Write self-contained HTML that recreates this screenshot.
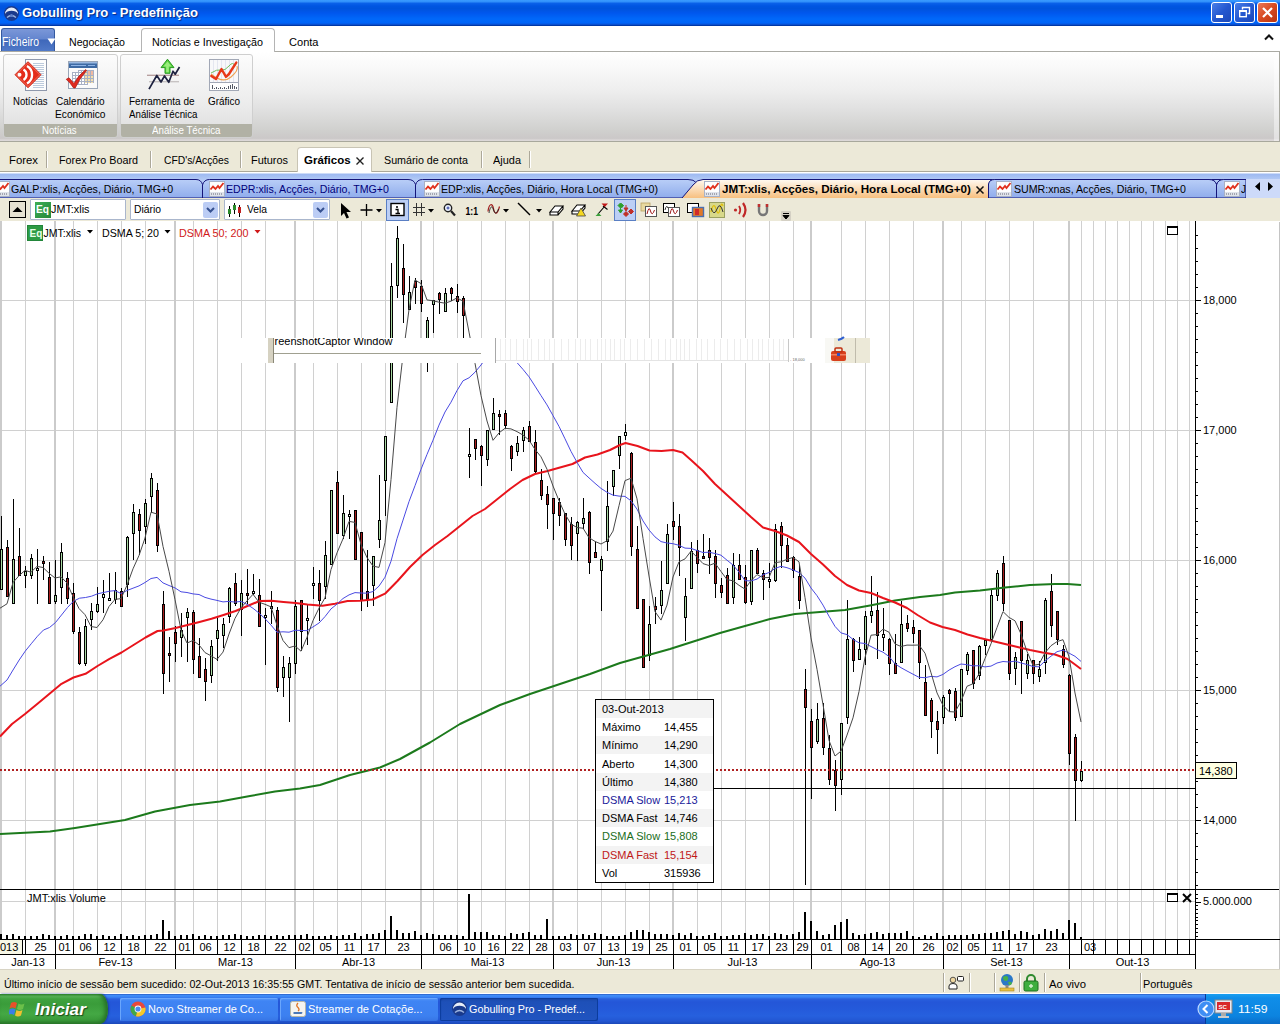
<!DOCTYPE html>
<html lang="pt"><head><meta charset="utf-8"><title>Gobulling Pro - Predefinição</title>
<style>
html,body{margin:0;padding:0}
body{width:1280px;height:1024px;overflow:hidden;position:relative;background:#fff;font-family:"Liberation Sans","DejaVu Sans",sans-serif;font-size:11px;color:#000}
.abs{position:absolute}
#title{position:absolute;left:0;top:0;width:1280px;height:26px;background:linear-gradient(#3a9bff 0,#3291fb 1.5px,#0a60e8 3.5px,#0055e2 6px,#0053dc 8.5px,#0057ee 13px,#0068fa 19px,#0064f8 23px,#0a4fd0 24.5px,#0038a8 25.5px,#0038a8 26px)}
#title .cap{position:absolute;left:22px;top:4px;font-weight:bold;font-size:13px;color:#fff;text-shadow:1px 1px 1px #0a2a80;white-space:nowrap;letter-spacing:0.2px}
.tb{position:absolute;top:2px;width:19px;height:19px;border:1px solid #fff;border-radius:3px;background:linear-gradient(135deg,#4a7fe8,#2458d0 50%,#1c48b8)}
.tb.close{background:linear-gradient(135deg,#e87858,#d84a20 50%,#b83410)}
#tabs1{position:absolute;left:0;top:26px;width:1280px;height:25px;background:#fff;border-bottom:1px solid #aaaaa4}
#ribbon{position:absolute;left:0;top:52px;width:1280px;height:89px;background:linear-gradient(#fff 0,#f8f8f8 20%,#eee 43%,#e0e0e0 65%,#d0d0ce 88%,#cbc8c8 97%,#dcd8d8 99%)}
.grp{position:absolute;top:2px;height:82px;border:1px solid #cfcfcf;border-radius:3px;background:linear-gradient(#fcfcfc,#ececec 60%,#dcdcdc);overflow:hidden}
.grp .gl{position:absolute;left:0;right:0;bottom:0;height:13px;background:#b1b1a5;color:#fff;text-align:center;font-size:11px;line-height:13px}
.rl{position:absolute;text-align:center;font-size:11px;line-height:13px;white-space:nowrap}
.t1{position:absolute;top:9px;font-size:11px;white-space:nowrap}
#band{position:absolute;left:0;top:141px;width:1280px;height:81px;background:#ece9d8;box-shadow:inset 0 1px 0 #a8a89c}
.t2{position:absolute;top:153px;font-size:11px;white-space:nowrap}
.sep2{position:absolute;top:10px;width:1px;height:17px;background:#aca899;box-shadow:1px 0 0 #fff}
.ct{position:absolute;top:182px;font-size:11px;white-space:nowrap}
.tx{position:absolute;white-space:nowrap;transform-origin:0 0;line-height:13px;font-size:11px}
.cb{top:58px;height:21px;box-sizing:border-box;border:1px solid #aab6cc;background:#fff;border-radius:1px}
#status{position:absolute;left:0;top:970px;width:1280px;height:23px;background:#ece9d8;border-bottom:1px solid #fff}
.ssep{position:absolute;top:3px;width:1px;height:19px;background:#aca899;box-shadow:1px 0 0 #fff}
#taskbar{position:absolute;left:0;top:994px;width:1280px;height:30px;background:linear-gradient(#2a5cc0 0,#3f8cf8 1.5px,#3a84f4 3px,#2960de 5px,#2456d8 8px,#2459da 14px,#2660de 22px,#2256d2 27px,#1b48b8 30px)}
#start{position:absolute;left:0;top:0;width:108px;height:30px;border-radius:0 8px 8px 0 / 0 15px 15px 0;background:linear-gradient(#2f8a2f 0,#5cb85c 2px,#3fa23f 5px,#3a9c3a 10px,#44a844 20px,#3a9a3a 26px,#2a7a2a 30px);box-shadow:inset -3px 0 4px #267026,1px 0 2px #1a3a9a}
.tk{position:absolute;top:4px;height:23px;border-radius:2px;background:linear-gradient(#5c9cfa 0,#3f84f4 3px,#3c80f0 18px,#3674e4 23px);box-shadow:inset 1px 1px 0 #6aa6fc}
.tk.on{background:linear-gradient(#1a48a8 0,#1e50b8 4px,#2054c0 23px);box-shadow:inset 1px 1px 1px #0c3c9c, inset -1px -1px 0 #0c3c9c}
#tray{position:absolute;left:1205px;top:0;width:75px;height:30px;background:linear-gradient(#1aa0f0 0,#0f8ee9 4px,#0c84e0 22px,#0a6cc8 30px);border-left:1px solid #0a3a9a}

</style></head><body>
<div id="title">
 <svg class="abs" style="left:3px;top:5px" width="17" height="17" viewBox="0 0 17 17"><circle cx="8.5" cy="8.5" r="7.5" fill="#1a3a8c"/><path d="M2,9 a6.5,6.5 0 0 1 13,0 a7,5 0 0 0 -13,0z" fill="#e8eef8"/><path d="M4,12.5 q4.5,-4 9,0" stroke="#9db4e0" stroke-width="1.2" fill="none"/><circle cx="8.5" cy="10.5" r="1.6" fill="#5f7fc8"/></svg>
 <span class="tx" style="left:21.5px;top:5px;font-weight:bold;font-size:13px;line-height:16px;color:#fff;text-shadow:1px 1px 1px #0a2a80;transform:scaleX(1.003)">Gobulling Pro - Predefinição</span>
 <div class="tb" style="left:1211px"><svg width="19" height="19"><rect x="4" y="12" width="7" height="3" fill="#fff"/></svg></div>
 <div class="tb" style="left:1234px"><svg width="19" height="19"><path d="M7.5,6.5 v-2 h7 v6 h-2" fill="none" stroke="#fff" stroke-width="1.4"/><rect x="4.7" y="7.7" width="6.6" height="6" fill="none" stroke="#fff" stroke-width="1.4"/><rect x="4" y="7" width="8" height="2" fill="#fff"/></svg></div>
 <div class="tb close" style="left:1257px"><svg width="19" height="19"><path d="M5,5 L14,14 M14,5 L5,14" stroke="#fff" stroke-width="2.2"/></svg></div>
</div>
<div id="tabs1">
 <div class="abs" style="left:1px;top:2px;width:54px;height:23px;border-radius:3px 3px 0 0;background:linear-gradient(#7b97d8 0,#6486cf 45%,#3f68ba 50%,#5079c8 100%);border:1px solid #35599f;border-bottom:none;box-sizing:border-box"></div>
 <span class="tx" style="left:1.5px;top:9px;color:#fff;font-size:12px;line-height:15px;transform:scaleX(0.867)">Ficheiro</span>
 <svg class="abs" style="left:47px;top:12px" width="9" height="7"><path d="M0.5,0.5 h8 l-4,6z" fill="#fff"/></svg>
 <span class="tx" style="left:68.5px;top:10px;;transform:scaleX(0.964)">Negociação</span>
 <div class="abs" style="left:141px;top:2px;width:134px;height:25px;box-sizing:border-box;border:1px solid #b4b4b4;border-bottom:none;border-radius:4px 4px 0 0;background:#fff"></div>
 <span class="tx" style="left:151.5px;top:10px;;transform:scaleX(0.976)">Notícias e Investigação</span>
 <span class="tx" style="left:289px;top:10px;;transform:scaleX(1.005)">Conta</span>
 <svg class="abs" style="left:1264px;top:8px" width="10" height="7"><path d="M1,5.5 L5,1.5 L9,5.5" stroke="#111" stroke-width="2" fill="none"/></svg>
</div>
<div id="ribbon">
 <div class="abs" style="left:1279px;top:0;width:1px;height:89px;background:#a8a8a0"></div><div class="abs" style="left:1274px;top:0;width:5px;height:89px;background:rgba(255,255,255,.45)"></div>
 <div class="grp" style="left:3px;width:113px"><div class="gl"></div></div>
 <div class="grp" style="left:120px;width:131px"><div class="gl"></div></div>
 <span class="tx" style="left:42px;top:72px;color:#fff;transform:scaleX(0.868)">Notícias</span><span class="tx" style="left:151.5px;top:72px;color:#fff;transform:scaleX(0.884)">Análise Técnica</span>
 <!-- icons -->
 <svg class="abs" style="left:14px;top:6px" width="34" height="34" viewBox="0 0 34 34">
  <rect x="11.500" y="1.500" width="21" height="31" fill="#fdfdfd" stroke="#8e98ac"/>
  <g stroke="#bccadc" stroke-width="1"><path d="M19,5.500h11M19,7.500h11M19,9.500h11M22,11.500h8M24,13.500h6M25,15.500h5M25,17.500h5M24,19.500h6M22,21.500h8M20,23.500h10M18,25.500h12M19,27.500h11M19,29.500h11"/></g>
  <path d="M14,4.500 L26.200,16.700 L14,28.900 L1.800,16.700z" fill="#e42c1a" stroke="#ee5a48" stroke-width="1.600" stroke-linejoin="round"/>
  <path d="M14,3.700 L27,16.700 L14,29.700 L1,16.700z" fill="none" stroke="#c8200f" stroke-width="0.800" stroke-linejoin="round"/>
  <circle cx="5.500" cy="16.700" r="2" fill="#fff"/>
  <path d="M9.500,11.500 a6,6 0 0 1 0,10.400" stroke="#fff" stroke-width="2.300" fill="none"/>
  <path d="M13,8 a10,10 0 0 1 0,17.400" stroke="#fff" stroke-width="2.300" fill="none"/>
 </svg>
 <svg class="abs" style="left:65px;top:6px" width="34" height="34" viewBox="0 0 34 34">
  <rect x="3.500" y="3.500" width="29" height="27" fill="#fafafa" stroke="#9aa6b8"/>
  <rect x="4" y="4" width="28" height="6" fill="#3d6aa4"/><rect x="4" y="4" width="28" height="1.500" fill="#9ab8e0"/><path d="M6,7.500h15M23,7.500h7" stroke="#8fb4e6" stroke-width="1.200"/>
  <g shape-rendering="crispEdges">
   <rect x="7" y="14" width="15" height="14" fill="#fff"/><rect x="13" y="12" width="16" height="13" fill="#fff"/>
   <rect x="20" y="12" width="9" height="13" fill="#f6e0a8"/><rect x="23" y="12" width="6" height="6" fill="#f0b8a0"/>
   <g stroke="#a8b0c4" stroke-width="1"><path d="M7,14.500h15M7,17.500h22M7,20.500h22M7,23.500h22M7,26.500h15M13,12.500h16M7.500,14v13M10.500,14v13M13.500,12v15M16.500,12v15M19.500,12v15M22.500,12v15M25.500,12v13M28.500,12v13"/></g>
  </g>
  <path d="M1.200,21.300 L4,19.800 L9,25.500 Q13.500,17 20.800,11.600 L21.600,12.400 Q14.500,20.500 10.200,30 L8.600,30 Q5.500,25 1.200,21.300z" fill="#e02a20" stroke="#a81a12" stroke-width="0.700"/>
 </svg>
 <svg class="abs" style="left:147px;top:6px" width="34" height="34" viewBox="0 0 34 34">
  <path d="M0,17.300h32" stroke="#b49a9a" stroke-width="1.300"/><path d="M2,23.700h30" stroke="#c4c0c0" stroke-width="1.300"/>
  <path d="M2,31.200 L9.800,17.500 L14,24 L17.500,18 L21.800,24.300 L26,13.200 L28.200,16.200 L32.500,9" fill="none" stroke="#1e2240" stroke-width="1.700" stroke-linejoin="round"/>
  <path d="M20.500,1.200 L27,9.600 H23 V15.300 H18 V9.600 H14z" fill="#58d040" stroke="#2a9a22" stroke-width="1" stroke-linejoin="round"/>
  <path d="M20.500,3.500 L24.500,8.600 H21.800 V14.300 H19.200 V8.600 H16.500z" fill="#9aee7c"/>
 </svg>
 <svg class="abs" style="left:209px;top:6px" width="31" height="34" viewBox="0 0 31 34">
  <rect x="0.500" y="1.500" width="29" height="31" fill="#f8f8fa" stroke="#a2a8b6"/>
  <g stroke="#e4e6f0" stroke-width="1"><path d="M4.500,2v22M8.500,2v22M12.500,2v22M16.500,2v22M20.500,2v22M24.500,2v22"/></g>
  <path d="M1,24.500h28" stroke="#a2a8b6"/><rect x="1" y="25" width="28" height="7" fill="#fff"/>
  <g stroke="#555a66" stroke-width="1"><path d="M3.500,31v-4M5.500,31v-1M7.500,31v-2M9.500,31v-1M11.500,31v-2M13.500,31v-1M15.500,31v-2M17.500,31v-1M19.500,31v-3M21.500,31v-4M23.500,31v-5M25.500,31v-3M27.500,31v-2"/></g>
  <path d="M2,16 Q14,26 22,19 T28,8" stroke="#f0a050" stroke-width="1.100" fill="none"/>
  <path d="M2,15 Q8,11 12,12 T20,8 T26,8" stroke="#70c060" stroke-width="1" fill="none"/>
  <path d="M2.300,18 L7,21 L12.500,11 L17,18.800 L20,16 L22.500,12 L27.300,4.600" fill="none" stroke="#e83818" stroke-width="2.400" stroke-linejoin="round" stroke-linecap="round"/>
 </svg>
 <span class="tx" style="left:13px;top:43px;;transform:scaleX(0.868)">Notícias</span>
 <span class="tx" style="left:56px;top:43px;;transform:scaleX(0.912)">Calendário</span><span class="tx" style="left:55px;top:56px;;transform:scaleX(0.928)">Económico</span>
 <span class="tx" style="left:129px;top:43px;;transform:scaleX(0.908)">Ferramenta de</span><span class="tx" style="left:128.5px;top:56px;;transform:scaleX(0.884)">Análise Técnica</span>
 <span class="tx" style="left:207.5px;top:43px;;transform:scaleX(0.902)">Gráfico</span>
</div>

<div id="band">
 <!-- tab row 2 : band top = 141 -->
 <div class="abs" style="left:0;top:30px;width:1280px;height:1px;background:#aca899"></div>
 <div class="abs" style="left:297px;top:6px;width:75px;height:26px;box-sizing:border-box;background:#fff;border:1px solid #c8c4b4;border-bottom:none;border-radius:4px 4px 0 0"></div>
 <span class="tx" style="left:8.5px;top:13px;;transform:scaleX(1.031)">Forex</span><span class="tx" style="left:59px;top:13px;;transform:scaleX(0.979)">Forex Pro Board</span><span class="tx" style="left:163.5px;top:13px;;transform:scaleX(0.937)">CFD's/Acções</span><span class="tx" style="left:250.5px;top:13px;;transform:scaleX(0.992)">Futuros</span>
 <span class="tx" style="left:304px;top:13px;font-weight:bold;transform:scaleX(1.042)">Gráficos</span><span class="tx" style="left:384px;top:13px;;transform:scaleX(0.974)">Sumário de conta</span><span class="tx" style="left:492.5px;top:13px;;transform:scaleX(0.995)">Ajuda</span>
 <svg class="abs" style="left:355px;top:15px" width="10" height="10"><path d="M1.500,1.500 L8.500,8.500 M8.500,1.500 L1.500,8.500" stroke="#222" stroke-width="1.400"/></svg>
 <div class="sep2" style="left:46px"></div><div class="sep2" style="left:150px"></div><div class="sep2" style="left:240px"></div><div class="sep2" style="left:481px"></div><div class="sep2" style="left:529px"></div>
 <!-- blue band -->
 <div class="abs" style="left:0;top:31px;width:1280px;height:26px;background:linear-gradient(#fff 0,#fff 1px,#9db9f1 2px,#b4cbf6 8px,#a9c2f4 26px)"></div>
 <!-- chart tabs -->
 <svg class="abs" style="left:0;top:31px" width="1280" height="26" viewBox="0 172 1280 26">
  <defs>
   <linearGradient id="tg" x1="0" y1="0" x2="0" y2="1"><stop offset="0" stop-color="#b9cef7"/><stop offset="1" stop-color="#8facec"/></linearGradient>
   <linearGradient id="ta" x1="0" y1="0" x2="0" y2="1"><stop offset="0" stop-color="#fffaf2"/><stop offset="1" stop-color="#f7be7c"/></linearGradient>
  </defs>
  <path d="M-5,198 V179.500 H196 q5,0 6.500,5 V198z" fill="url(#tg)" stroke="#15157a"/>
  <path d="M202.500,198 V185 q1.500,-5.500 7,-5.500 H408 q6,0 7.500,5 V198z" fill="url(#tg)" stroke="#15157a"/>
  <path d="M415.500,198 V185 q1.500,-5.500 7,-5.500 H688 q6,0 8,3 L684,198z" fill="url(#tg)" stroke="#15157a"/>
  <path d="M988.500,198 V184 q1,-4.500 6,-4.500 H1209 q6,0 7.500,5 V198z" fill="url(#tg)" stroke="#15157a"/>
  <path d="M1216.500,198 V185 q1.500,-5.500 7,-5.500 H1246 V198z" fill="url(#tg)" stroke="#15157a"/>
  <path d="M682,198.500 L693,185 q4,-5.500 10,-5.500 H990 V198.500z" fill="url(#ta)"/>
  <path d="M682,198 L693,185 q4,-5.500 10,-5.500 H1246" fill="none" stroke="#15157a"/>
  <rect x="988" y="180" width="258" height="19" fill="none"/>
  <path d="M988.500,198 V184 q1,-4.500 6,-4.500 H1209 q6,0 7.500,5 V198z" fill="url(#tg)" stroke="#15157a"/>
  <path d="M1216.500,198 V185 q1.500,-5.500 7,-5.500 H1246 V198z" fill="url(#tg)" stroke="#15157a"/>
  <rect x="1246" y="179" width="34" height="19" fill="#cddaf9"/>
  <path d="M1257,183 v8 l-4.500,-4z M1267,183 v8 l4.500,-4z" fill="#000"/>
 </svg>
 <svg class="abs" style="left:-6px;top:40px" width="16" height="16" viewBox="0 0 16 16"><rect x="0.500" y="0.500" width="15" height="15" fill="#fdfdfd" stroke="#a9b2c6"/><rect x="1" y="11" width="14" height="4" fill="#dfe3ea"/><path d="M2.500,13.500v-1M4.500,13.500v-1M6.500,13.500v-1M8.500,13.500v-1M10.500,13.500v-1M12.500,13.500v-1" stroke="#667"/><path d="M1.500,8.500 L4,5.500 L6.500,8 L9,5 L10.500,7 L14.500,2" fill="none" stroke="#e0301c" stroke-width="1.800"/></svg>
 <svg class="abs" style="left:209px;top:40px" width="16" height="16" viewBox="0 0 16 16"><rect x="0.500" y="0.500" width="15" height="15" fill="#fdfdfd" stroke="#a9b2c6"/><rect x="1" y="11" width="14" height="4" fill="#dfe3ea"/><path d="M2.500,13.500v-1M4.500,13.500v-1M6.500,13.500v-1M8.500,13.500v-1M10.500,13.500v-1M12.500,13.500v-1" stroke="#667"/><path d="M1.500,8.500 L4,5.500 L6.500,8 L9,5 L10.500,7 L14.500,2" fill="none" stroke="#e0301c" stroke-width="1.800"/></svg>
 <svg class="abs" style="left:424px;top:40px" width="16" height="16" viewBox="0 0 16 16"><rect x="0.500" y="0.500" width="15" height="15" fill="#fdfdfd" stroke="#a9b2c6"/><rect x="1" y="11" width="14" height="4" fill="#dfe3ea"/><path d="M2.500,13.500v-1M4.500,13.500v-1M6.500,13.500v-1M8.500,13.500v-1M10.500,13.500v-1M12.500,13.500v-1" stroke="#667"/><path d="M1.500,8.500 L4,5.500 L6.500,8 L9,5 L10.500,7 L14.500,2" fill="none" stroke="#e0301c" stroke-width="1.800"/></svg>
 <svg class="abs" style="left:704px;top:40px" width="16" height="16" viewBox="0 0 16 16"><rect x="0.500" y="0.500" width="15" height="15" fill="#fdfdfd" stroke="#a9b2c6"/><rect x="1" y="11" width="14" height="4" fill="#dfe3ea"/><path d="M2.500,13.500v-1M4.500,13.500v-1M6.500,13.500v-1M8.500,13.500v-1M10.500,13.500v-1M12.500,13.500v-1" stroke="#667"/><path d="M1.500,8.500 L4,5.500 L6.500,8 L9,5 L10.500,7 L14.500,2" fill="none" stroke="#e0301c" stroke-width="1.800"/></svg>
 <svg class="abs" style="left:996px;top:40px" width="16" height="16" viewBox="0 0 16 16"><rect x="0.500" y="0.500" width="15" height="15" fill="#fdfdfd" stroke="#a9b2c6"/><rect x="1" y="11" width="14" height="4" fill="#dfe3ea"/><path d="M2.500,13.500v-1M4.500,13.500v-1M6.500,13.500v-1M8.500,13.500v-1M10.500,13.500v-1M12.500,13.500v-1" stroke="#667"/><path d="M1.500,8.500 L4,5.500 L6.500,8 L9,5 L10.500,7 L14.500,2" fill="none" stroke="#e0301c" stroke-width="1.800"/></svg>
 <svg class="abs" style="left:1224px;top:40px" width="16" height="16" viewBox="0 0 16 16"><rect x="0.500" y="0.500" width="15" height="15" fill="#fdfdfd" stroke="#a9b2c6"/><rect x="1" y="11" width="14" height="4" fill="#dfe3ea"/><path d="M2.500,13.500v-1M4.500,13.500v-1M6.500,13.500v-1M8.500,13.500v-1M10.500,13.500v-1M12.500,13.500v-1" stroke="#667"/><path d="M1.500,8.500 L4,5.500 L6.500,8 L9,5 L10.500,7 L14.500,2" fill="none" stroke="#e0301c" stroke-width="1.800"/></svg>
 <span class="tx" style="left:11px;top:42px;;transform:scaleX(0.967)">GALP:xlis, Acções, Diário, TMG+0</span><span class="tx" style="left:226px;top:42px;color:#00007a;transform:scaleX(0.965)">EDPR:xlis, Acções, Diário, TMG+0</span><span class="tx" style="left:441px;top:42px;;transform:scaleX(0.966)">EDP:xlis, Acções, Diário, Hora Local (TMG+0)</span>
 <span class="tx" style="left:721.5px;top:42px;font-weight:bold;transform:scaleX(1.058)">JMT:xlis, Acções, Diário, Hora Local (TMG+0)</span><span class="tx" style="left:1013.5px;top:42px;;transform:scaleX(0.966)">SUMR:xnas, Acções, Diário, TMG+0</span><span class="tx" style="left:1240.5px;top:42px;;transform:scaleX(0.909)">J</span>
 <svg class="abs" style="left:975px;top:44px" width="10" height="10"><path d="M1.500,1.500 L8.500,8.500 M8.500,1.500 L1.500,8.500" stroke="#111" stroke-width="1.500"/></svg>
 <div class="abs" style="left:1246px;top:38px;width:34px;height:19px;background:#cddaf9"></div>
 <svg class="abs" style="left:1250px;top:39px" width="28" height="14"><path d="M10,2 v9 l-5,-4.500z M18,2 v9 l5,-4.500z" fill="#000"/></svg>

 <!-- toolbar (band-relative; band top=141) -->
 <div class="abs" style="left:9px;top:60px;width:17px;height:17px;box-sizing:border-box;border:1px solid #000;background:#e6e2d2"></div>
 <svg class="abs" style="left:9px;top:60px" width="17" height="17"><path d="M3.500,11 h10 l-5,-5z" fill="#000"/></svg>
 <div class="abs cb" style="left:30px;width:96px"></div>
 <div class="abs cb" style="left:130px;width:90px"></div>
 <div class="abs cb" style="left:224px;width:106px"></div>
 <div class="abs" style="left:35px;top:61px;width:16px;height:16px;background:linear-gradient(135deg,#3fae55,#25883b);"></div>
 <span class="tx" style="left:36px;top:62px;font-weight:bold;font-size:10px;color:#fff;transform:scaleX(1.017)">Eq</span>
 <span class="tx" style="left:51px;top:62px;;transform:scaleX(0.984)">JMT:xlis</span><span class="tx" style="left:133.5px;top:62px;;transform:scaleX(0.940)">Diário</span><span class="tx" style="left:246.5px;top:62px;;transform:scaleX(0.934)">Vela</span>
 <svg class="abs" style="left:203px;top:61px" width="15" height="16"><rect width="15" height="16" rx="2" fill="#bccdf5"/><path d="M4,6 L7.500,9.500 L11,6" stroke="#35508f" stroke-width="2" fill="none"/></svg><svg class="abs" style="left:313px;top:61px" width="15" height="16"><rect width="15" height="16" rx="2" fill="#bccdf5"/><path d="M4,6 L7.500,9.500 L11,6" stroke="#35508f" stroke-width="2" fill="none"/></svg>
 <svg class="abs" style="left:227px;top:61px" width="16" height="16"><g shape-rendering="crispEdges"><rect x="2" y="4" width="1" height="11" fill="#000"/><rect x="1" y="7" width="3" height="5" fill="#2a8a2a" stroke="none"/><rect x="7" y="1" width="1" height="11" fill="#000"/><rect x="6" y="3" width="3" height="5" fill="#2a8a2a"/><rect x="12" y="3" width="1" height="12" fill="#000"/><rect x="11" y="5" width="3" height="6" fill="#c02020"/></g></svg>
 <!-- tool icons -->
 <svg class="abs" style="left:336px;top:57px" width="460" height="24" viewBox="336 198 460 24">
  <path d="M341,203 v13 l3,-3 l2.500,5.500 l2.500,-1 l-2.500,-5.500 h4.500z" fill="#000"/>
  <path d="M366.500,204 v12 M360.500,210 h12" stroke="#000" stroke-width="1.300" fill="none"/>
  <path d="M376,209 h6 l-3,3.500z M428,209 h6 l-3,3.500z M503,209 h6 l-3,3.500z M536,209 h6 l-3,3.500z" fill="#000"/>
  <rect x="386.500" y="199.500" width="22" height="21" fill="#bccff5" stroke="#5a7fc4"/>
  <rect x="391" y="203.500" width="13" height="12" fill="#fff" stroke="#000" stroke-width="1.400"/>
  <path d="M396,207 h2 M395.500,209.500 h2.500 v4 M395.500,213.500 h4.500" stroke="#000" stroke-width="1.300" fill="none"/>
  <g stroke="#333" stroke-width="1" shape-rendering="crispEdges"><path d="M416.500,203 v13 M420.500,203 v13 M413,206.500 h12 M413,210.500 h12 M413,214.500 h12 M424.500,203 v13 M412.500,203 v13" stroke-opacity="0"/><path d="M416.500,203v13M421.500,203v13M413,207.500h12M413,212.500h12"/></g>
  <circle cx="448" cy="208" r="3.700" fill="#eef4ff" stroke="#222" stroke-width="1.400"/><path d="M451,211 l4,4.500" stroke="#222" stroke-width="2.200"/><path d="M446.500,208h3M448,206.500v3" stroke="#2a3fa0" stroke-width="1"/>
  <text x="465.500" y="214.500" font-family="Liberation Sans, sans-serif" font-size="11" font-weight="bold" fill="#000" textLength="12.500" lengthAdjust="spacingAndGlyphs">1:1</text>
  <path d="M488,211.500 C489,203 492.500,203 493.500,208.500 S497,216 499.500,206.500" stroke="#a01c1c" stroke-width="1.200" fill="none"/><path d="M489,213 C490.500,205.500 492,205.500 493.500,210 S496.500,214 498.500,209" stroke="#222" stroke-width="0.900" fill="none"/>
  <path d="M518,203 L530,215" stroke="#000" stroke-width="1.400"/>
  <path d="M550,212 l5,-6 h8 l-5,6z M550,212 v3 h8 v-3 M558,215 l5,-6 v-3" fill="#fff" stroke="#000" stroke-width="1.100"/>
  <path d="M572,211 l5,-6 h8 l-5,6z M572,211 v3 h8 v-3 M580,214 l5,-6 v-3" fill="#fff" stroke="#000" stroke-width="1.100"/><path d="M581,208 l4.500,8 h-9z" fill="#f5d820" stroke="#444" stroke-width="0.800"/>
  <path d="M598,214 L605,206 M603,206 L607.500,209.500" stroke="#000" stroke-width="1.100"/><path d="M601.500,203.500 h6.500 l-3.200,3.500z" fill="#c01818"/><path d="M595.500,216 h6 l-3,-3z" fill="#3aa03a"/>
  <rect x="614.500" y="199.500" width="21" height="21" fill="#bccff5" stroke="#5a7fc4"/>
  <path d="M618,205.500 l2.500,-2.500 l2.500,2.500 l-2.500,2.500z M621,203.500 l2.500,2 l-2,2.500 M620.500,208 v4 M618.500,210 l2,3 l2,-3z" fill="#2ea02e" stroke="#2ea02e" stroke-width="1"/><path d="M626,205 v5 M624,208 l2,3 l2,-3z M623.500,214 l2.500,-2.500 l2.500,2.500 l-2.500,2.500z M628.500,211.500 l2.500,-2.500 l2.500,2.500 l-2.500,2.500z" fill="#c03028" stroke="#c03028" stroke-width="1"/>
  <!-- group 2 -->
  <rect x="641" y="203" width="9" height="8" fill="#e8d9a0" stroke="#b8a060" stroke-width="0.800"/><rect x="645.500" y="206.500" width="11" height="10" fill="#fff" stroke="#555"/><path d="M647,214 q2,-9 3.500,-3 t4,-1" stroke="#a01818" fill="none"/>
  <rect x="663.500" y="203.500" width="11" height="9" fill="#fff" stroke="#000"/><rect x="668.500" y="207.500" width="11" height="9" fill="#fff" stroke="#555"/><path d="M670,214 q2,-9 3.500,-3 t4,-1" stroke="#a01818" fill="none"/><path d="M665,210 q1.500,-6 3,-2" stroke="#333" fill="none"/>
  <rect x="687.500" y="203.500" width="11" height="9" fill="#fff" stroke="#000"/><rect x="692.500" y="207.500" width="11" height="9" fill="#e07828" stroke="#4a6fb0" stroke-width="1.400"/><rect x="695" y="209" width="4" height="6" fill="#d02a2a"/>
  <rect x="709.500" y="202.500" width="15" height="15" fill="#d8d88a" stroke="#9aa060"/><path d="M711,212 q2.500,-11 5,-3 t4,0 t3,-3" stroke="#e0c010" stroke-width="1.300" fill="none"/><path d="M711,208 q3,9 6,1 t6,3" stroke="#333" fill="none"/>
  <circle cx="735.500" cy="210" r="1.600" fill="#c02828"/><path d="M739,206 q2.500,4 0,8" stroke="#c02828" stroke-width="1.800" fill="none"/><path d="M743,203 q5,7 0,14" stroke="#c02828" stroke-width="2.200" fill="none"/>
  <path d="M759,204 v7 a4,4 0 0 0 8,0 v-7" stroke="#777" stroke-width="2.400" fill="none"/><path d="M757.800,204 h2.400 v3 h-2.400z M765.800,204 h2.400 v3 h-2.400z" fill="#c03030"/>
  <rect x="781" y="211" width="10" height="10" rx="1" fill="#d4d0c4"/><path d="M783,213.500 h6 M783,215.500 h6 l-3,3.500z" stroke="#000" stroke-width="1" fill="#000"/>
 </svg>
</div>

<svg id="chart" width="1280" height="749" viewBox="0 221 1280 749" style="position:absolute;left:0;top:221px">
<rect x="0" y="221" width="1280" height="749" fill="#fff"/>
<g shape-rendering="crispEdges">
<rect x="0" y="300" width="1195" height="1" fill="#d0d0d0"/>
<rect x="0" y="430" width="1195" height="1" fill="#d0d0d0"/>
<rect x="0" y="560" width="1195" height="1" fill="#d0d0d0"/>
<rect x="0" y="690" width="1195" height="1" fill="#d0d0d0"/>
<rect x="0" y="820" width="1195" height="1" fill="#d0d0d0"/>
<rect x="0" y="901" width="1195" height="1" fill="#d0d0d0"/>
<rect x="25" y="221" width="1" height="718" fill="#d0d0d0"/>
<rect x="54" y="221" width="2" height="718" fill="#cbcbcb"/>
<rect x="73" y="221" width="1" height="718" fill="#d0d0d0"/>
<rect x="97" y="221" width="1" height="718" fill="#d0d0d0"/>
<rect x="121" y="221" width="1" height="718" fill="#d0d0d0"/>
<rect x="145" y="221" width="1" height="718" fill="#d0d0d0"/>
<rect x="174" y="221" width="2" height="718" fill="#cbcbcb"/>
<rect x="193" y="221" width="1" height="718" fill="#d0d0d0"/>
<rect x="217" y="221" width="1" height="718" fill="#d0d0d0"/>
<rect x="241" y="221" width="1" height="718" fill="#d0d0d0"/>
<rect x="265" y="221" width="1" height="718" fill="#d0d0d0"/>
<rect x="294" y="221" width="2" height="718" fill="#cbcbcb"/>
<rect x="313" y="221" width="1" height="718" fill="#d0d0d0"/>
<rect x="337" y="221" width="1" height="718" fill="#d0d0d0"/>
<rect x="361" y="221" width="1" height="718" fill="#d0d0d0"/>
<rect x="385" y="221" width="1" height="718" fill="#d0d0d0"/>
<rect x="420" y="221" width="2" height="718" fill="#cbcbcb"/>
<rect x="433" y="221" width="1" height="718" fill="#d0d0d0"/>
<rect x="457" y="221" width="1" height="718" fill="#d0d0d0"/>
<rect x="481" y="221" width="1" height="718" fill="#d0d0d0"/>
<rect x="505" y="221" width="1" height="718" fill="#d0d0d0"/>
<rect x="529" y="221" width="1" height="718" fill="#d0d0d0"/>
<rect x="552" y="221" width="2" height="718" fill="#cbcbcb"/>
<rect x="577" y="221" width="1" height="718" fill="#d0d0d0"/>
<rect x="601" y="221" width="1" height="718" fill="#d0d0d0"/>
<rect x="625" y="221" width="1" height="718" fill="#d0d0d0"/>
<rect x="649" y="221" width="1" height="718" fill="#d0d0d0"/>
<rect x="672" y="221" width="2" height="718" fill="#cbcbcb"/>
<rect x="697" y="221" width="1" height="718" fill="#d0d0d0"/>
<rect x="721" y="221" width="1" height="718" fill="#d0d0d0"/>
<rect x="745" y="221" width="1" height="718" fill="#d0d0d0"/>
<rect x="769" y="221" width="1" height="718" fill="#d0d0d0"/>
<rect x="793" y="221" width="1" height="718" fill="#d0d0d0"/>
<rect x="810" y="221" width="2" height="718" fill="#cbcbcb"/>
<rect x="841" y="221" width="1" height="718" fill="#d0d0d0"/>
<rect x="865" y="221" width="1" height="718" fill="#d0d0d0"/>
<rect x="889" y="221" width="1" height="718" fill="#d0d0d0"/>
<rect x="913" y="221" width="1" height="718" fill="#d0d0d0"/>
<rect x="942" y="221" width="2" height="718" fill="#cbcbcb"/>
<rect x="961" y="221" width="1" height="718" fill="#d0d0d0"/>
<rect x="985" y="221" width="1" height="718" fill="#d0d0d0"/>
<rect x="1009" y="221" width="1" height="718" fill="#d0d0d0"/>
<rect x="1033" y="221" width="1" height="718" fill="#d0d0d0"/>
<rect x="1068" y="221" width="2" height="718" fill="#cbcbcb"/>
<rect x="1081" y="221" width="1" height="718" fill="#d0d0d0"/>
<rect x="1093" y="221" width="1" height="718" fill="#d0d0d0"/>
<rect x="1105" y="221" width="1" height="718" fill="#d0d0d0"/>
<rect x="1117" y="221" width="1" height="718" fill="#d0d0d0"/>
<rect x="1129" y="221" width="1" height="718" fill="#d0d0d0"/>
<rect x="1141" y="221" width="1" height="718" fill="#d0d0d0"/>
<rect x="1153" y="221" width="1" height="718" fill="#d0d0d0"/>
<rect x="1165" y="221" width="1" height="718" fill="#d0d0d0"/>
<rect x="1177" y="221" width="1" height="718" fill="#d0d0d0"/>
<rect x="1189" y="221" width="1" height="718" fill="#d0d0d0"/>
<rect x="0" y="221" width="2" height="718" fill="#cbcbcb"/>
</g>
<g shape-rendering="crispEdges">
<rect x="1" y="516" width="1" height="74" fill="#000"/>
<rect x="0" y="549" width="3" height="41" fill="#000"/>
<rect x="1" y="550" width="1" height="39" fill="#a9d9a3"/>
<rect x="7" y="540" width="1" height="57" fill="#000"/>
<rect x="6" y="547" width="3" height="50" fill="#000"/>
<rect x="7" y="548" width="1" height="48" fill="#a81c1c"/>
<rect x="13" y="499" width="1" height="105" fill="#000"/>
<rect x="12" y="559" width="3" height="45" fill="#000"/>
<rect x="13" y="560" width="1" height="43" fill="#a9d9a3"/>
<rect x="19" y="528" width="1" height="48" fill="#000"/>
<rect x="18" y="556" width="3" height="20" fill="#000"/>
<rect x="19" y="557" width="1" height="18" fill="#a81c1c"/>
<rect x="25" y="566" width="1" height="22" fill="#000"/>
<rect x="24" y="571" width="3" height="5" fill="#000"/>
<rect x="25" y="572" width="1" height="3" fill="#a9d9a3"/>
<rect x="31" y="554" width="1" height="25" fill="#000"/>
<rect x="30" y="558" width="3" height="18" fill="#000"/>
<rect x="31" y="559" width="1" height="16" fill="#a9d9a3"/>
<rect x="37" y="549" width="1" height="55" fill="#000"/>
<rect x="36" y="568" width="3" height="3" fill="#000"/>
<rect x="37" y="569" width="1" height="1" fill="#f4fff0"/>
<rect x="43" y="556" width="1" height="24" fill="#000"/>
<rect x="42" y="561" width="3" height="3" fill="#000"/>
<rect x="43" y="562" width="1" height="1" fill="#a81c1c"/>
<rect x="49" y="562" width="1" height="42" fill="#000"/>
<rect x="48" y="577" width="3" height="27" fill="#000"/>
<rect x="49" y="578" width="1" height="25" fill="#a81c1c"/>
<rect x="55" y="560" width="1" height="44" fill="#000"/>
<rect x="54" y="595" width="3" height="7" fill="#000"/>
<rect x="55" y="596" width="1" height="5" fill="#a9d9a3"/>
<rect x="61" y="543" width="1" height="61" fill="#000"/>
<rect x="60" y="552" width="3" height="36" fill="#000"/>
<rect x="61" y="553" width="1" height="34" fill="#a9d9a3"/>
<rect x="67" y="572" width="1" height="32" fill="#000"/>
<rect x="66" y="578" width="3" height="21" fill="#000"/>
<rect x="67" y="579" width="1" height="19" fill="#a81c1c"/>
<rect x="73" y="583" width="1" height="51" fill="#000"/>
<rect x="72" y="593" width="3" height="39" fill="#000"/>
<rect x="73" y="594" width="1" height="37" fill="#a81c1c"/>
<rect x="79" y="627" width="1" height="38" fill="#000"/>
<rect x="78" y="632" width="3" height="32" fill="#000"/>
<rect x="79" y="633" width="1" height="30" fill="#a81c1c"/>
<rect x="85" y="619" width="1" height="47" fill="#000"/>
<rect x="84" y="626" width="3" height="38" fill="#000"/>
<rect x="85" y="627" width="1" height="36" fill="#a9d9a3"/>
<rect x="91" y="603" width="1" height="27" fill="#000"/>
<rect x="90" y="611" width="3" height="9" fill="#000"/>
<rect x="91" y="612" width="1" height="7" fill="#a9d9a3"/>
<rect x="97" y="587" width="1" height="26" fill="#000"/>
<rect x="96" y="604" width="3" height="8" fill="#000"/>
<rect x="97" y="605" width="1" height="6" fill="#a9d9a3"/>
<rect x="103" y="580" width="1" height="33" fill="#000"/>
<rect x="102" y="594" width="3" height="4" fill="#000"/>
<rect x="103" y="595" width="1" height="2" fill="#f4fff0"/>
<rect x="109" y="573" width="1" height="28" fill="#000"/>
<rect x="108" y="598" width="3" height="3" fill="#000"/>
<rect x="109" y="599" width="1" height="1" fill="#f4fff0"/>
<rect x="115" y="572" width="1" height="32" fill="#000"/>
<rect x="114" y="590" width="3" height="10" fill="#000"/>
<rect x="115" y="591" width="1" height="8" fill="#a9d9a3"/>
<rect x="121" y="588" width="1" height="19" fill="#000"/>
<rect x="120" y="591" width="3" height="16" fill="#000"/>
<rect x="121" y="592" width="1" height="14" fill="#a81c1c"/>
<rect x="127" y="536" width="1" height="61" fill="#000"/>
<rect x="126" y="537" width="3" height="48" fill="#000"/>
<rect x="127" y="538" width="1" height="46" fill="#a9d9a3"/>
<rect x="133" y="504" width="1" height="56" fill="#000"/>
<rect x="132" y="512" width="3" height="22" fill="#000"/>
<rect x="133" y="513" width="1" height="20" fill="#a9d9a3"/>
<rect x="139" y="509" width="1" height="46" fill="#000"/>
<rect x="138" y="514" width="3" height="17" fill="#000"/>
<rect x="139" y="515" width="1" height="15" fill="#a81c1c"/>
<rect x="145" y="499" width="1" height="45" fill="#000"/>
<rect x="144" y="503" width="3" height="24" fill="#000"/>
<rect x="145" y="504" width="1" height="22" fill="#a9d9a3"/>
<rect x="151" y="473" width="1" height="40" fill="#000"/>
<rect x="150" y="478" width="3" height="19" fill="#000"/>
<rect x="151" y="479" width="1" height="17" fill="#a9d9a3"/>
<rect x="157" y="483" width="1" height="69" fill="#000"/>
<rect x="156" y="490" width="3" height="56" fill="#000"/>
<rect x="157" y="491" width="1" height="54" fill="#a81c1c"/>
<rect x="163" y="591" width="1" height="103" fill="#000"/>
<rect x="162" y="604" width="3" height="70" fill="#000"/>
<rect x="163" y="605" width="1" height="68" fill="#a81c1c"/>
<rect x="169" y="637" width="1" height="45" fill="#000"/>
<rect x="168" y="653" width="3" height="3" fill="#000"/>
<rect x="169" y="654" width="1" height="1" fill="#a81c1c"/>
<rect x="175" y="626" width="1" height="36" fill="#000"/>
<rect x="174" y="632" width="3" height="12" fill="#000"/>
<rect x="175" y="633" width="1" height="10" fill="#a81c1c"/>
<rect x="181" y="613" width="1" height="44" fill="#000"/>
<rect x="180" y="630" width="3" height="8" fill="#000"/>
<rect x="181" y="631" width="1" height="6" fill="#a9d9a3"/>
<rect x="187" y="608" width="1" height="54" fill="#000"/>
<rect x="186" y="612" width="3" height="6" fill="#000"/>
<rect x="187" y="613" width="1" height="4" fill="#a9d9a3"/>
<rect x="193" y="610" width="1" height="64" fill="#000"/>
<rect x="192" y="612" width="3" height="48" fill="#000"/>
<rect x="193" y="613" width="1" height="46" fill="#a81c1c"/>
<rect x="199" y="638" width="1" height="40" fill="#000"/>
<rect x="198" y="656" width="3" height="22" fill="#000"/>
<rect x="199" y="657" width="1" height="20" fill="#a81c1c"/>
<rect x="205" y="658" width="1" height="43" fill="#000"/>
<rect x="204" y="669" width="3" height="13" fill="#000"/>
<rect x="205" y="670" width="1" height="11" fill="#a81c1c"/>
<rect x="211" y="640" width="1" height="43" fill="#000"/>
<rect x="210" y="646" width="3" height="30" fill="#000"/>
<rect x="211" y="647" width="1" height="28" fill="#a9d9a3"/>
<rect x="217" y="618" width="1" height="43" fill="#000"/>
<rect x="216" y="630" width="3" height="9" fill="#000"/>
<rect x="217" y="631" width="1" height="7" fill="#a9d9a3"/>
<rect x="223" y="618" width="1" height="30" fill="#000"/>
<rect x="222" y="624" width="3" height="12" fill="#000"/>
<rect x="223" y="625" width="1" height="10" fill="#a9d9a3"/>
<rect x="229" y="587" width="1" height="36" fill="#000"/>
<rect x="228" y="588" width="3" height="29" fill="#000"/>
<rect x="229" y="589" width="1" height="27" fill="#a9d9a3"/>
<rect x="235" y="573" width="1" height="33" fill="#000"/>
<rect x="234" y="583" width="3" height="21" fill="#000"/>
<rect x="235" y="584" width="1" height="19" fill="#a81c1c"/>
<rect x="241" y="580" width="1" height="56" fill="#000"/>
<rect x="240" y="593" width="3" height="17" fill="#000"/>
<rect x="241" y="594" width="1" height="15" fill="#a9d9a3"/>
<rect x="247" y="569" width="1" height="35" fill="#000"/>
<rect x="246" y="593" width="3" height="3" fill="#000"/>
<rect x="247" y="594" width="1" height="1" fill="#a81c1c"/>
<rect x="253" y="574" width="1" height="21" fill="#000"/>
<rect x="252" y="591" width="3" height="3" fill="#000"/>
<rect x="253" y="592" width="1" height="1" fill="#f4fff0"/>
<rect x="259" y="579" width="1" height="48" fill="#000"/>
<rect x="258" y="595" width="3" height="32" fill="#000"/>
<rect x="259" y="596" width="1" height="30" fill="#a81c1c"/>
<rect x="265" y="608" width="1" height="57" fill="#000"/>
<rect x="264" y="615" width="3" height="3" fill="#000"/>
<rect x="265" y="616" width="1" height="1" fill="#f4fff0"/>
<rect x="271" y="591" width="1" height="33" fill="#000"/>
<rect x="270" y="606" width="3" height="3" fill="#000"/>
<rect x="271" y="607" width="1" height="1" fill="#f4fff0"/>
<rect x="277" y="607" width="1" height="85" fill="#000"/>
<rect x="276" y="610" width="3" height="78" fill="#000"/>
<rect x="277" y="611" width="1" height="76" fill="#a81c1c"/>
<rect x="283" y="656" width="1" height="41" fill="#000"/>
<rect x="282" y="667" width="3" height="11" fill="#000"/>
<rect x="283" y="668" width="1" height="9" fill="#a9d9a3"/>
<rect x="289" y="657" width="1" height="65" fill="#000"/>
<rect x="288" y="663" width="3" height="15" fill="#000"/>
<rect x="289" y="664" width="1" height="13" fill="#a9d9a3"/>
<rect x="295" y="600" width="1" height="74" fill="#000"/>
<rect x="294" y="606" width="3" height="58" fill="#000"/>
<rect x="295" y="607" width="1" height="56" fill="#a9d9a3"/>
<rect x="301" y="600" width="1" height="51" fill="#000"/>
<rect x="300" y="600" width="3" height="32" fill="#000"/>
<rect x="301" y="601" width="1" height="30" fill="#a81c1c"/>
<rect x="307" y="604" width="1" height="41" fill="#000"/>
<rect x="306" y="618" width="3" height="3" fill="#000"/>
<rect x="307" y="619" width="1" height="1" fill="#f4fff0"/>
<rect x="313" y="567" width="1" height="32" fill="#000"/>
<rect x="312" y="583" width="3" height="3" fill="#000"/>
<rect x="313" y="584" width="1" height="1" fill="#f4fff0"/>
<rect x="319" y="570" width="1" height="51" fill="#000"/>
<rect x="318" y="583" width="3" height="18" fill="#000"/>
<rect x="319" y="584" width="1" height="16" fill="#a81c1c"/>
<rect x="325" y="541" width="1" height="58" fill="#000"/>
<rect x="324" y="555" width="3" height="32" fill="#000"/>
<rect x="325" y="556" width="1" height="30" fill="#a9d9a3"/>
<rect x="331" y="490" width="1" height="75" fill="#000"/>
<rect x="330" y="490" width="3" height="75" fill="#000"/>
<rect x="331" y="491" width="1" height="73" fill="#a9d9a3"/>
<rect x="337" y="471" width="1" height="63" fill="#000"/>
<rect x="336" y="482" width="3" height="52" fill="#000"/>
<rect x="337" y="483" width="1" height="50" fill="#a81c1c"/>
<rect x="343" y="495" width="1" height="44" fill="#000"/>
<rect x="342" y="513" width="3" height="23" fill="#000"/>
<rect x="343" y="514" width="1" height="21" fill="#a9d9a3"/>
<rect x="349" y="510" width="1" height="29" fill="#000"/>
<rect x="348" y="514" width="3" height="3" fill="#000"/>
<rect x="349" y="515" width="1" height="1" fill="#f4fff0"/>
<rect x="355" y="510" width="1" height="50" fill="#000"/>
<rect x="354" y="510" width="3" height="50" fill="#000"/>
<rect x="355" y="511" width="1" height="48" fill="#a81c1c"/>
<rect x="361" y="532" width="1" height="79" fill="#000"/>
<rect x="360" y="532" width="3" height="69" fill="#000"/>
<rect x="361" y="533" width="1" height="67" fill="#a81c1c"/>
<rect x="367" y="550" width="1" height="57" fill="#000"/>
<rect x="366" y="591" width="3" height="9" fill="#000"/>
<rect x="367" y="592" width="1" height="7" fill="#a81c1c"/>
<rect x="373" y="556" width="1" height="50" fill="#000"/>
<rect x="372" y="556" width="3" height="30" fill="#000"/>
<rect x="373" y="557" width="1" height="28" fill="#a9d9a3"/>
<rect x="379" y="475" width="1" height="73" fill="#000"/>
<rect x="378" y="520" width="3" height="20" fill="#000"/>
<rect x="379" y="521" width="1" height="18" fill="#a9d9a3"/>
<rect x="385" y="436" width="1" height="80" fill="#000"/>
<rect x="384" y="436" width="3" height="45" fill="#000"/>
<rect x="385" y="437" width="1" height="43" fill="#a9d9a3"/>
<rect x="391" y="263" width="1" height="140" fill="#000"/>
<rect x="390" y="286" width="3" height="117" fill="#000"/>
<rect x="391" y="287" width="1" height="115" fill="#a9d9a3"/>
<rect x="397" y="226" width="1" height="72" fill="#000"/>
<rect x="396" y="238" width="3" height="48" fill="#000"/>
<rect x="397" y="239" width="1" height="46" fill="#a9d9a3"/>
<rect x="403" y="244" width="1" height="79" fill="#000"/>
<rect x="402" y="268" width="3" height="27" fill="#000"/>
<rect x="403" y="269" width="1" height="25" fill="#a81c1c"/>
<rect x="409" y="276" width="1" height="34" fill="#000"/>
<rect x="408" y="292" width="3" height="18" fill="#000"/>
<rect x="409" y="293" width="1" height="16" fill="#a9d9a3"/>
<rect x="415" y="278" width="1" height="26" fill="#000"/>
<rect x="414" y="281" width="3" height="7" fill="#000"/>
<rect x="415" y="282" width="1" height="5" fill="#a81c1c"/>
<rect x="421" y="280" width="1" height="32" fill="#000"/>
<rect x="420" y="286" width="3" height="18" fill="#000"/>
<rect x="421" y="287" width="1" height="16" fill="#a81c1c"/>
<rect x="427" y="317" width="1" height="55" fill="#000"/>
<rect x="426" y="320" width="3" height="25" fill="#000"/>
<rect x="427" y="321" width="1" height="23" fill="#a9d9a3"/>
<rect x="433" y="300" width="1" height="33" fill="#000"/>
<rect x="432" y="300" width="3" height="5" fill="#000"/>
<rect x="433" y="301" width="1" height="3" fill="#a9d9a3"/>
<rect x="439" y="292" width="1" height="22" fill="#000"/>
<rect x="438" y="293" width="3" height="7" fill="#000"/>
<rect x="439" y="294" width="1" height="5" fill="#a81c1c"/>
<rect x="445" y="288" width="1" height="24" fill="#000"/>
<rect x="444" y="293" width="3" height="19" fill="#000"/>
<rect x="445" y="294" width="1" height="17" fill="#a9d9a3"/>
<rect x="451" y="287" width="1" height="14" fill="#000"/>
<rect x="450" y="288" width="3" height="6" fill="#000"/>
<rect x="451" y="289" width="1" height="4" fill="#a81c1c"/>
<rect x="457" y="284" width="1" height="29" fill="#000"/>
<rect x="456" y="296" width="3" height="6" fill="#000"/>
<rect x="457" y="297" width="1" height="4" fill="#a81c1c"/>
<rect x="463" y="296" width="1" height="44" fill="#000"/>
<rect x="462" y="298" width="3" height="18" fill="#000"/>
<rect x="463" y="299" width="1" height="16" fill="#a81c1c"/>
<rect x="469" y="428" width="1" height="50" fill="#000"/>
<rect x="468" y="454" width="3" height="3" fill="#000"/>
<rect x="469" y="455" width="1" height="1" fill="#f4fff0"/>
<rect x="475" y="439" width="1" height="21" fill="#000"/>
<rect x="474" y="439" width="3" height="10" fill="#000"/>
<rect x="475" y="440" width="1" height="8" fill="#a81c1c"/>
<rect x="481" y="445" width="1" height="41" fill="#000"/>
<rect x="480" y="446" width="3" height="10" fill="#000"/>
<rect x="481" y="447" width="1" height="8" fill="#a81c1c"/>
<rect x="487" y="430" width="1" height="36" fill="#000"/>
<rect x="486" y="430" width="3" height="30" fill="#000"/>
<rect x="487" y="431" width="1" height="28" fill="#a9d9a3"/>
<rect x="493" y="398" width="1" height="32" fill="#000"/>
<rect x="492" y="413" width="3" height="17" fill="#000"/>
<rect x="493" y="414" width="1" height="15" fill="#a9d9a3"/>
<rect x="499" y="410" width="1" height="25" fill="#000"/>
<rect x="498" y="414" width="3" height="3" fill="#000"/>
<rect x="499" y="415" width="1" height="1" fill="#a81c1c"/>
<rect x="505" y="410" width="1" height="19" fill="#000"/>
<rect x="504" y="413" width="3" height="13" fill="#000"/>
<rect x="505" y="414" width="1" height="11" fill="#a81c1c"/>
<rect x="511" y="445" width="1" height="26" fill="#000"/>
<rect x="510" y="446" width="3" height="13" fill="#000"/>
<rect x="511" y="447" width="1" height="11" fill="#a81c1c"/>
<rect x="517" y="436" width="1" height="20" fill="#000"/>
<rect x="516" y="443" width="3" height="9" fill="#000"/>
<rect x="517" y="444" width="1" height="7" fill="#a9d9a3"/>
<rect x="523" y="427" width="1" height="25" fill="#000"/>
<rect x="522" y="430" width="3" height="11" fill="#000"/>
<rect x="523" y="431" width="1" height="9" fill="#a9d9a3"/>
<rect x="529" y="421" width="1" height="21" fill="#000"/>
<rect x="528" y="426" width="3" height="16" fill="#000"/>
<rect x="529" y="427" width="1" height="14" fill="#a81c1c"/>
<rect x="535" y="430" width="1" height="43" fill="#000"/>
<rect x="534" y="442" width="3" height="30" fill="#000"/>
<rect x="535" y="443" width="1" height="28" fill="#a81c1c"/>
<rect x="541" y="469" width="1" height="31" fill="#000"/>
<rect x="540" y="480" width="3" height="16" fill="#000"/>
<rect x="541" y="481" width="1" height="14" fill="#a81c1c"/>
<rect x="547" y="486" width="1" height="43" fill="#000"/>
<rect x="546" y="494" width="3" height="11" fill="#000"/>
<rect x="547" y="495" width="1" height="9" fill="#a81c1c"/>
<rect x="553" y="498" width="1" height="42" fill="#000"/>
<rect x="552" y="498" width="3" height="16" fill="#000"/>
<rect x="553" y="499" width="1" height="14" fill="#a81c1c"/>
<rect x="559" y="498" width="1" height="28" fill="#000"/>
<rect x="558" y="502" width="3" height="14" fill="#000"/>
<rect x="559" y="503" width="1" height="12" fill="#a81c1c"/>
<rect x="565" y="513" width="1" height="33" fill="#000"/>
<rect x="564" y="513" width="3" height="27" fill="#000"/>
<rect x="565" y="514" width="1" height="25" fill="#a81c1c"/>
<rect x="571" y="517" width="1" height="43" fill="#000"/>
<rect x="570" y="524" width="3" height="22" fill="#000"/>
<rect x="571" y="525" width="1" height="20" fill="#a81c1c"/>
<rect x="577" y="521" width="1" height="40" fill="#000"/>
<rect x="576" y="522" width="3" height="12" fill="#000"/>
<rect x="577" y="523" width="1" height="10" fill="#a9d9a3"/>
<rect x="583" y="498" width="1" height="31" fill="#000"/>
<rect x="582" y="518" width="3" height="6" fill="#000"/>
<rect x="583" y="519" width="1" height="4" fill="#a9d9a3"/>
<rect x="589" y="511" width="1" height="63" fill="#000"/>
<rect x="588" y="512" width="3" height="51" fill="#000"/>
<rect x="589" y="513" width="1" height="49" fill="#a81c1c"/>
<rect x="595" y="542" width="1" height="16" fill="#000"/>
<rect x="594" y="552" width="3" height="6" fill="#000"/>
<rect x="595" y="553" width="1" height="4" fill="#a81c1c"/>
<rect x="601" y="556" width="1" height="55" fill="#000"/>
<rect x="600" y="559" width="3" height="12" fill="#000"/>
<rect x="601" y="560" width="1" height="10" fill="#a9d9a3"/>
<rect x="607" y="481" width="1" height="70" fill="#000"/>
<rect x="606" y="506" width="3" height="36" fill="#000"/>
<rect x="607" y="507" width="1" height="34" fill="#a9d9a3"/>
<rect x="613" y="470" width="1" height="26" fill="#000"/>
<rect x="612" y="470" width="3" height="17" fill="#000"/>
<rect x="613" y="471" width="1" height="15" fill="#a9d9a3"/>
<rect x="619" y="436" width="1" height="33" fill="#000"/>
<rect x="618" y="436" width="3" height="20" fill="#000"/>
<rect x="619" y="437" width="1" height="18" fill="#a9d9a3"/>
<rect x="625" y="424" width="1" height="16" fill="#000"/>
<rect x="624" y="432" width="3" height="4" fill="#000"/>
<rect x="625" y="433" width="1" height="2" fill="#f4fff0"/>
<rect x="631" y="452" width="1" height="104" fill="#000"/>
<rect x="630" y="453" width="3" height="94" fill="#000"/>
<rect x="631" y="454" width="1" height="92" fill="#a81c1c"/>
<rect x="637" y="526" width="1" height="83" fill="#000"/>
<rect x="636" y="549" width="3" height="60" fill="#000"/>
<rect x="637" y="550" width="1" height="58" fill="#a81c1c"/>
<rect x="643" y="599" width="1" height="69" fill="#000"/>
<rect x="642" y="599" width="3" height="69" fill="#000"/>
<rect x="643" y="600" width="1" height="67" fill="#a81c1c"/>
<rect x="649" y="606" width="1" height="55" fill="#000"/>
<rect x="648" y="624" width="3" height="32" fill="#000"/>
<rect x="649" y="625" width="1" height="30" fill="#a9d9a3"/>
<rect x="655" y="597" width="1" height="27" fill="#000"/>
<rect x="654" y="606" width="3" height="4" fill="#000"/>
<rect x="655" y="607" width="1" height="2" fill="#a81c1c"/>
<rect x="661" y="561" width="1" height="53" fill="#000"/>
<rect x="660" y="590" width="3" height="16" fill="#000"/>
<rect x="661" y="591" width="1" height="14" fill="#a9d9a3"/>
<rect x="667" y="524" width="1" height="60" fill="#000"/>
<rect x="666" y="534" width="3" height="50" fill="#000"/>
<rect x="667" y="535" width="1" height="48" fill="#a9d9a3"/>
<rect x="673" y="502" width="1" height="38" fill="#000"/>
<rect x="672" y="521" width="3" height="6" fill="#000"/>
<rect x="673" y="522" width="1" height="4" fill="#a81c1c"/>
<rect x="679" y="514" width="1" height="62" fill="#000"/>
<rect x="678" y="526" width="3" height="22" fill="#000"/>
<rect x="679" y="527" width="1" height="20" fill="#a81c1c"/>
<rect x="685" y="578" width="1" height="63" fill="#000"/>
<rect x="684" y="596" width="3" height="22" fill="#000"/>
<rect x="685" y="597" width="1" height="20" fill="#a9d9a3"/>
<rect x="691" y="542" width="1" height="47" fill="#000"/>
<rect x="690" y="551" width="3" height="38" fill="#000"/>
<rect x="691" y="552" width="1" height="36" fill="#a9d9a3"/>
<rect x="697" y="540" width="1" height="33" fill="#000"/>
<rect x="696" y="550" width="3" height="14" fill="#000"/>
<rect x="697" y="551" width="1" height="12" fill="#a81c1c"/>
<rect x="703" y="534" width="1" height="25" fill="#000"/>
<rect x="702" y="556" width="3" height="3" fill="#000"/>
<rect x="703" y="557" width="1" height="1" fill="#a81c1c"/>
<rect x="709" y="538" width="1" height="36" fill="#000"/>
<rect x="708" y="550" width="3" height="8" fill="#000"/>
<rect x="709" y="551" width="1" height="6" fill="#a81c1c"/>
<rect x="715" y="550" width="1" height="48" fill="#000"/>
<rect x="714" y="556" width="3" height="28" fill="#000"/>
<rect x="715" y="557" width="1" height="26" fill="#a81c1c"/>
<rect x="721" y="578" width="1" height="20" fill="#000"/>
<rect x="720" y="585" width="3" height="8" fill="#000"/>
<rect x="721" y="586" width="1" height="6" fill="#a81c1c"/>
<rect x="727" y="568" width="1" height="36" fill="#000"/>
<rect x="726" y="575" width="3" height="29" fill="#000"/>
<rect x="727" y="576" width="1" height="27" fill="#a81c1c"/>
<rect x="733" y="553" width="1" height="51" fill="#000"/>
<rect x="732" y="565" width="3" height="33" fill="#000"/>
<rect x="733" y="566" width="1" height="31" fill="#a9d9a3"/>
<rect x="739" y="554" width="1" height="26" fill="#000"/>
<rect x="738" y="565" width="3" height="15" fill="#000"/>
<rect x="739" y="566" width="1" height="13" fill="#a81c1c"/>
<rect x="745" y="565" width="1" height="39" fill="#000"/>
<rect x="744" y="577" width="3" height="26" fill="#000"/>
<rect x="745" y="578" width="1" height="24" fill="#a81c1c"/>
<rect x="751" y="550" width="1" height="55" fill="#000"/>
<rect x="750" y="550" width="3" height="52" fill="#000"/>
<rect x="751" y="551" width="1" height="50" fill="#a9d9a3"/>
<rect x="757" y="548" width="1" height="26" fill="#000"/>
<rect x="756" y="550" width="3" height="24" fill="#000"/>
<rect x="757" y="551" width="1" height="22" fill="#a81c1c"/>
<rect x="763" y="570" width="1" height="30" fill="#000"/>
<rect x="762" y="573" width="3" height="7" fill="#000"/>
<rect x="763" y="574" width="1" height="5" fill="#a81c1c"/>
<rect x="769" y="563" width="1" height="25" fill="#000"/>
<rect x="768" y="579" width="3" height="3" fill="#000"/>
<rect x="769" y="580" width="1" height="1" fill="#f4fff0"/>
<rect x="775" y="524" width="1" height="58" fill="#000"/>
<rect x="774" y="529" width="3" height="52" fill="#000"/>
<rect x="775" y="530" width="1" height="50" fill="#a9d9a3"/>
<rect x="781" y="522" width="1" height="46" fill="#000"/>
<rect x="780" y="526" width="3" height="20" fill="#000"/>
<rect x="781" y="527" width="1" height="18" fill="#a81c1c"/>
<rect x="787" y="538" width="1" height="24" fill="#000"/>
<rect x="786" y="545" width="3" height="17" fill="#000"/>
<rect x="787" y="546" width="1" height="15" fill="#a81c1c"/>
<rect x="793" y="556" width="1" height="22" fill="#000"/>
<rect x="792" y="557" width="3" height="14" fill="#000"/>
<rect x="793" y="558" width="1" height="12" fill="#a81c1c"/>
<rect x="799" y="565" width="1" height="44" fill="#000"/>
<rect x="798" y="576" width="3" height="25" fill="#000"/>
<rect x="799" y="577" width="1" height="23" fill="#a81c1c"/>
<rect x="805" y="669" width="1" height="216" fill="#000"/>
<rect x="804" y="689" width="3" height="19" fill="#000"/>
<rect x="805" y="690" width="1" height="17" fill="#a81c1c"/>
<rect x="811" y="709" width="1" height="90" fill="#000"/>
<rect x="810" y="721" width="3" height="27" fill="#000"/>
<rect x="811" y="722" width="1" height="25" fill="#a81c1c"/>
<rect x="817" y="703" width="1" height="41" fill="#000"/>
<rect x="816" y="719" width="3" height="23" fill="#000"/>
<rect x="817" y="720" width="1" height="21" fill="#a9d9a3"/>
<rect x="823" y="703" width="1" height="52" fill="#000"/>
<rect x="822" y="718" width="3" height="30" fill="#000"/>
<rect x="823" y="719" width="1" height="28" fill="#a81c1c"/>
<rect x="829" y="735" width="1" height="50" fill="#000"/>
<rect x="828" y="748" width="3" height="32" fill="#000"/>
<rect x="829" y="749" width="1" height="30" fill="#a81c1c"/>
<rect x="835" y="760" width="1" height="51" fill="#000"/>
<rect x="834" y="770" width="3" height="16" fill="#000"/>
<rect x="835" y="771" width="1" height="14" fill="#a81c1c"/>
<rect x="841" y="723" width="1" height="72" fill="#000"/>
<rect x="840" y="723" width="3" height="57" fill="#000"/>
<rect x="841" y="724" width="1" height="55" fill="#a9d9a3"/>
<rect x="847" y="600" width="1" height="124" fill="#000"/>
<rect x="846" y="639" width="3" height="79" fill="#000"/>
<rect x="847" y="640" width="1" height="77" fill="#a9d9a3"/>
<rect x="853" y="638" width="1" height="34" fill="#000"/>
<rect x="852" y="639" width="3" height="22" fill="#000"/>
<rect x="853" y="640" width="1" height="20" fill="#a81c1c"/>
<rect x="859" y="637" width="1" height="23" fill="#000"/>
<rect x="858" y="649" width="3" height="11" fill="#000"/>
<rect x="859" y="650" width="1" height="9" fill="#a9d9a3"/>
<rect x="865" y="611" width="1" height="54" fill="#000"/>
<rect x="864" y="616" width="3" height="34" fill="#000"/>
<rect x="865" y="617" width="1" height="32" fill="#a9d9a3"/>
<rect x="871" y="576" width="1" height="47" fill="#000"/>
<rect x="870" y="611" width="3" height="5" fill="#000"/>
<rect x="871" y="612" width="1" height="3" fill="#a9d9a3"/>
<rect x="877" y="592" width="1" height="67" fill="#000"/>
<rect x="876" y="610" width="3" height="26" fill="#000"/>
<rect x="877" y="611" width="1" height="24" fill="#a81c1c"/>
<rect x="883" y="608" width="1" height="43" fill="#000"/>
<rect x="882" y="634" width="3" height="4" fill="#000"/>
<rect x="883" y="635" width="1" height="2" fill="#f4fff0"/>
<rect x="889" y="638" width="1" height="37" fill="#000"/>
<rect x="888" y="639" width="3" height="25" fill="#000"/>
<rect x="889" y="640" width="1" height="23" fill="#a81c1c"/>
<rect x="895" y="634" width="1" height="40" fill="#000"/>
<rect x="894" y="663" width="3" height="11" fill="#000"/>
<rect x="895" y="664" width="1" height="9" fill="#a81c1c"/>
<rect x="901" y="601" width="1" height="62" fill="#000"/>
<rect x="900" y="624" width="3" height="39" fill="#000"/>
<rect x="901" y="625" width="1" height="37" fill="#a9d9a3"/>
<rect x="907" y="615" width="1" height="17" fill="#000"/>
<rect x="906" y="623" width="3" height="6" fill="#000"/>
<rect x="907" y="624" width="1" height="4" fill="#a81c1c"/>
<rect x="913" y="620" width="1" height="23" fill="#000"/>
<rect x="912" y="627" width="3" height="7" fill="#000"/>
<rect x="913" y="628" width="1" height="5" fill="#a81c1c"/>
<rect x="919" y="630" width="1" height="49" fill="#000"/>
<rect x="918" y="630" width="3" height="33" fill="#000"/>
<rect x="919" y="631" width="1" height="31" fill="#a81c1c"/>
<rect x="925" y="665" width="1" height="51" fill="#000"/>
<rect x="924" y="682" width="3" height="34" fill="#000"/>
<rect x="925" y="683" width="1" height="32" fill="#a81c1c"/>
<rect x="931" y="698" width="1" height="40" fill="#000"/>
<rect x="930" y="700" width="3" height="22" fill="#000"/>
<rect x="931" y="701" width="1" height="20" fill="#a81c1c"/>
<rect x="937" y="711" width="1" height="43" fill="#000"/>
<rect x="936" y="721" width="3" height="9" fill="#000"/>
<rect x="937" y="722" width="1" height="7" fill="#a81c1c"/>
<rect x="943" y="695" width="1" height="29" fill="#000"/>
<rect x="942" y="697" width="3" height="21" fill="#000"/>
<rect x="943" y="698" width="1" height="19" fill="#a9d9a3"/>
<rect x="949" y="689" width="1" height="23" fill="#000"/>
<rect x="948" y="690" width="3" height="4" fill="#000"/>
<rect x="949" y="691" width="1" height="2" fill="#a81c1c"/>
<rect x="955" y="688" width="1" height="33" fill="#000"/>
<rect x="954" y="691" width="3" height="27" fill="#000"/>
<rect x="955" y="692" width="1" height="25" fill="#a81c1c"/>
<rect x="961" y="669" width="1" height="48" fill="#000"/>
<rect x="960" y="669" width="3" height="48" fill="#000"/>
<rect x="961" y="670" width="1" height="46" fill="#a9d9a3"/>
<rect x="967" y="652" width="1" height="23" fill="#000"/>
<rect x="966" y="654" width="3" height="17" fill="#000"/>
<rect x="967" y="655" width="1" height="15" fill="#a9d9a3"/>
<rect x="973" y="650" width="1" height="39" fill="#000"/>
<rect x="972" y="650" width="3" height="34" fill="#000"/>
<rect x="973" y="651" width="1" height="32" fill="#a81c1c"/>
<rect x="979" y="645" width="1" height="35" fill="#000"/>
<rect x="978" y="646" width="3" height="30" fill="#000"/>
<rect x="979" y="647" width="1" height="28" fill="#a9d9a3"/>
<rect x="985" y="639" width="1" height="16" fill="#000"/>
<rect x="984" y="640" width="3" height="6" fill="#000"/>
<rect x="985" y="641" width="1" height="4" fill="#a9d9a3"/>
<rect x="991" y="590" width="1" height="50" fill="#000"/>
<rect x="990" y="595" width="3" height="45" fill="#000"/>
<rect x="991" y="596" width="1" height="43" fill="#a9d9a3"/>
<rect x="997" y="570" width="1" height="31" fill="#000"/>
<rect x="996" y="573" width="3" height="23" fill="#000"/>
<rect x="997" y="574" width="1" height="21" fill="#a9d9a3"/>
<rect x="1003" y="556" width="1" height="55" fill="#000"/>
<rect x="1002" y="563" width="3" height="41" fill="#000"/>
<rect x="1003" y="564" width="1" height="39" fill="#a81c1c"/>
<rect x="1009" y="620" width="1" height="60" fill="#000"/>
<rect x="1008" y="620" width="3" height="54" fill="#000"/>
<rect x="1009" y="621" width="1" height="52" fill="#a81c1c"/>
<rect x="1015" y="652" width="1" height="33" fill="#000"/>
<rect x="1014" y="657" width="3" height="12" fill="#000"/>
<rect x="1015" y="658" width="1" height="10" fill="#a9d9a3"/>
<rect x="1021" y="621" width="1" height="73" fill="#000"/>
<rect x="1020" y="621" width="3" height="40" fill="#000"/>
<rect x="1021" y="622" width="1" height="38" fill="#a81c1c"/>
<rect x="1027" y="654" width="1" height="25" fill="#000"/>
<rect x="1026" y="660" width="3" height="14" fill="#000"/>
<rect x="1027" y="661" width="1" height="12" fill="#a9d9a3"/>
<rect x="1033" y="660" width="1" height="24" fill="#000"/>
<rect x="1032" y="660" width="3" height="14" fill="#000"/>
<rect x="1033" y="661" width="1" height="12" fill="#a81c1c"/>
<rect x="1039" y="661" width="1" height="21" fill="#000"/>
<rect x="1038" y="669" width="3" height="8" fill="#000"/>
<rect x="1039" y="670" width="1" height="6" fill="#a9d9a3"/>
<rect x="1045" y="598" width="1" height="76" fill="#000"/>
<rect x="1044" y="600" width="3" height="63" fill="#000"/>
<rect x="1045" y="601" width="1" height="61" fill="#a9d9a3"/>
<rect x="1051" y="574" width="1" height="63" fill="#000"/>
<rect x="1050" y="591" width="3" height="35" fill="#000"/>
<rect x="1051" y="592" width="1" height="33" fill="#a81c1c"/>
<rect x="1057" y="611" width="1" height="34" fill="#000"/>
<rect x="1056" y="611" width="3" height="29" fill="#000"/>
<rect x="1057" y="612" width="1" height="27" fill="#a81c1c"/>
<rect x="1063" y="645" width="1" height="23" fill="#000"/>
<rect x="1062" y="649" width="3" height="16" fill="#000"/>
<rect x="1063" y="650" width="1" height="14" fill="#a81c1c"/>
<rect x="1069" y="674" width="1" height="91" fill="#000"/>
<rect x="1068" y="675" width="3" height="79" fill="#000"/>
<rect x="1069" y="676" width="1" height="77" fill="#a81c1c"/>
<rect x="1075" y="734" width="1" height="87" fill="#000"/>
<rect x="1074" y="737" width="3" height="44" fill="#000"/>
<rect x="1075" y="738" width="1" height="42" fill="#a81c1c"/>
<rect x="1081" y="761" width="1" height="21" fill="#000"/>
<rect x="1080" y="771" width="3" height="10" fill="#000"/>
<rect x="1081" y="772" width="1" height="8" fill="#a9d9a3"/>
<rect x="0" y="934" width="2" height="5" fill="#000"/>
<rect x="6" y="935" width="2" height="4" fill="#000"/>
<rect x="12" y="934" width="2" height="5" fill="#000"/>
<rect x="18" y="936" width="2" height="3" fill="#000"/>
<rect x="24" y="936" width="2" height="3" fill="#000"/>
<rect x="30" y="936" width="2" height="3" fill="#000"/>
<rect x="36" y="936" width="2" height="3" fill="#000"/>
<rect x="42" y="934" width="2" height="5" fill="#000"/>
<rect x="48" y="935" width="2" height="4" fill="#000"/>
<rect x="54" y="936" width="2" height="3" fill="#000"/>
<rect x="60" y="936" width="2" height="3" fill="#000"/>
<rect x="66" y="935" width="2" height="4" fill="#000"/>
<rect x="72" y="936" width="2" height="3" fill="#000"/>
<rect x="78" y="936" width="2" height="3" fill="#000"/>
<rect x="84" y="934" width="2" height="5" fill="#000"/>
<rect x="90" y="934" width="2" height="5" fill="#000"/>
<rect x="96" y="936" width="2" height="3" fill="#000"/>
<rect x="102" y="935" width="2" height="4" fill="#000"/>
<rect x="108" y="936" width="2" height="3" fill="#000"/>
<rect x="114" y="936" width="2" height="3" fill="#000"/>
<rect x="120" y="934" width="2" height="5" fill="#000"/>
<rect x="126" y="936" width="2" height="3" fill="#000"/>
<rect x="132" y="935" width="2" height="4" fill="#000"/>
<rect x="138" y="936" width="2" height="3" fill="#000"/>
<rect x="144" y="935" width="2" height="4" fill="#000"/>
<rect x="150" y="935" width="2" height="4" fill="#000"/>
<rect x="156" y="934" width="2" height="5" fill="#000"/>
<rect x="162" y="920" width="2" height="19" fill="#000"/>
<rect x="168" y="931" width="2" height="8" fill="#000"/>
<rect x="174" y="936" width="2" height="3" fill="#000"/>
<rect x="180" y="935" width="2" height="4" fill="#000"/>
<rect x="186" y="935" width="2" height="4" fill="#000"/>
<rect x="192" y="934" width="2" height="5" fill="#000"/>
<rect x="198" y="936" width="2" height="3" fill="#000"/>
<rect x="204" y="935" width="2" height="4" fill="#000"/>
<rect x="210" y="936" width="2" height="3" fill="#000"/>
<rect x="216" y="936" width="2" height="3" fill="#000"/>
<rect x="222" y="935" width="2" height="4" fill="#000"/>
<rect x="228" y="935" width="2" height="4" fill="#000"/>
<rect x="234" y="934" width="2" height="5" fill="#000"/>
<rect x="240" y="935" width="2" height="4" fill="#000"/>
<rect x="246" y="936" width="2" height="3" fill="#000"/>
<rect x="252" y="936" width="2" height="3" fill="#000"/>
<rect x="258" y="935" width="2" height="4" fill="#000"/>
<rect x="264" y="935" width="2" height="4" fill="#000"/>
<rect x="270" y="936" width="2" height="3" fill="#000"/>
<rect x="276" y="935" width="2" height="4" fill="#000"/>
<rect x="282" y="936" width="2" height="3" fill="#000"/>
<rect x="288" y="935" width="2" height="4" fill="#000"/>
<rect x="294" y="935" width="2" height="4" fill="#000"/>
<rect x="300" y="935" width="2" height="4" fill="#000"/>
<rect x="306" y="934" width="2" height="5" fill="#000"/>
<rect x="312" y="936" width="2" height="3" fill="#000"/>
<rect x="318" y="936" width="2" height="3" fill="#000"/>
<rect x="324" y="936" width="2" height="3" fill="#000"/>
<rect x="330" y="935" width="2" height="4" fill="#000"/>
<rect x="336" y="936" width="2" height="3" fill="#000"/>
<rect x="342" y="935" width="2" height="4" fill="#000"/>
<rect x="348" y="935" width="2" height="4" fill="#000"/>
<rect x="354" y="933" width="2" height="6" fill="#000"/>
<rect x="360" y="936" width="2" height="3" fill="#000"/>
<rect x="366" y="934" width="2" height="5" fill="#000"/>
<rect x="372" y="934" width="2" height="5" fill="#000"/>
<rect x="378" y="933" width="2" height="6" fill="#000"/>
<rect x="384" y="930" width="2" height="9" fill="#000"/>
<rect x="390" y="916" width="2" height="23" fill="#000"/>
<rect x="396" y="930" width="2" height="9" fill="#000"/>
<rect x="402" y="933" width="2" height="6" fill="#000"/>
<rect x="408" y="933" width="2" height="6" fill="#000"/>
<rect x="414" y="931" width="2" height="8" fill="#000"/>
<rect x="420" y="935" width="2" height="4" fill="#000"/>
<rect x="426" y="933" width="2" height="6" fill="#000"/>
<rect x="432" y="934" width="2" height="5" fill="#000"/>
<rect x="438" y="935" width="2" height="4" fill="#000"/>
<rect x="444" y="935" width="2" height="4" fill="#000"/>
<rect x="450" y="935" width="2" height="4" fill="#000"/>
<rect x="456" y="935" width="2" height="4" fill="#000"/>
<rect x="462" y="936" width="2" height="3" fill="#000"/>
<rect x="468" y="894" width="2" height="45" fill="#000"/>
<rect x="474" y="932" width="2" height="7" fill="#000"/>
<rect x="480" y="932" width="2" height="7" fill="#000"/>
<rect x="486" y="932" width="2" height="7" fill="#000"/>
<rect x="492" y="935" width="2" height="4" fill="#000"/>
<rect x="498" y="935" width="2" height="4" fill="#000"/>
<rect x="504" y="936" width="2" height="3" fill="#000"/>
<rect x="510" y="933" width="2" height="6" fill="#000"/>
<rect x="516" y="934" width="2" height="5" fill="#000"/>
<rect x="522" y="933" width="2" height="6" fill="#000"/>
<rect x="528" y="932" width="2" height="7" fill="#000"/>
<rect x="534" y="935" width="2" height="4" fill="#000"/>
<rect x="540" y="935" width="2" height="4" fill="#000"/>
<rect x="546" y="919" width="2" height="20" fill="#000"/>
<rect x="552" y="936" width="2" height="3" fill="#000"/>
<rect x="558" y="936" width="2" height="3" fill="#000"/>
<rect x="564" y="936" width="2" height="3" fill="#000"/>
<rect x="570" y="934" width="2" height="5" fill="#000"/>
<rect x="576" y="935" width="2" height="4" fill="#000"/>
<rect x="582" y="934" width="2" height="5" fill="#000"/>
<rect x="588" y="935" width="2" height="4" fill="#000"/>
<rect x="594" y="933" width="2" height="6" fill="#000"/>
<rect x="600" y="934" width="2" height="5" fill="#000"/>
<rect x="606" y="936" width="2" height="3" fill="#000"/>
<rect x="612" y="936" width="2" height="3" fill="#000"/>
<rect x="618" y="936" width="2" height="3" fill="#000"/>
<rect x="624" y="935" width="2" height="4" fill="#000"/>
<rect x="630" y="932" width="2" height="7" fill="#000"/>
<rect x="636" y="930" width="2" height="9" fill="#000"/>
<rect x="642" y="930" width="2" height="9" fill="#000"/>
<rect x="648" y="932" width="2" height="7" fill="#000"/>
<rect x="654" y="934" width="2" height="5" fill="#000"/>
<rect x="660" y="934" width="2" height="5" fill="#000"/>
<rect x="666" y="934" width="2" height="5" fill="#000"/>
<rect x="672" y="935" width="2" height="4" fill="#000"/>
<rect x="678" y="933" width="2" height="6" fill="#000"/>
<rect x="684" y="935" width="2" height="4" fill="#000"/>
<rect x="690" y="933" width="2" height="6" fill="#000"/>
<rect x="696" y="936" width="2" height="3" fill="#000"/>
<rect x="702" y="936" width="2" height="3" fill="#000"/>
<rect x="708" y="935" width="2" height="4" fill="#000"/>
<rect x="714" y="933" width="2" height="6" fill="#000"/>
<rect x="720" y="936" width="2" height="3" fill="#000"/>
<rect x="726" y="936" width="2" height="3" fill="#000"/>
<rect x="732" y="935" width="2" height="4" fill="#000"/>
<rect x="738" y="935" width="2" height="4" fill="#000"/>
<rect x="744" y="933" width="2" height="6" fill="#000"/>
<rect x="750" y="935" width="2" height="4" fill="#000"/>
<rect x="756" y="934" width="2" height="5" fill="#000"/>
<rect x="762" y="934" width="2" height="5" fill="#000"/>
<rect x="768" y="936" width="2" height="3" fill="#000"/>
<rect x="774" y="933" width="2" height="6" fill="#000"/>
<rect x="780" y="934" width="2" height="5" fill="#000"/>
<rect x="786" y="935" width="2" height="4" fill="#000"/>
<rect x="792" y="934" width="2" height="5" fill="#000"/>
<rect x="798" y="932" width="2" height="7" fill="#000"/>
<rect x="804" y="912" width="2" height="27" fill="#000"/>
<rect x="810" y="921" width="2" height="18" fill="#000"/>
<rect x="816" y="931" width="2" height="8" fill="#000"/>
<rect x="822" y="935" width="2" height="4" fill="#000"/>
<rect x="828" y="934" width="2" height="5" fill="#000"/>
<rect x="834" y="925" width="2" height="14" fill="#000"/>
<rect x="840" y="922" width="2" height="17" fill="#000"/>
<rect x="846" y="919" width="2" height="20" fill="#000"/>
<rect x="852" y="933" width="2" height="6" fill="#000"/>
<rect x="858" y="935" width="2" height="4" fill="#000"/>
<rect x="864" y="934" width="2" height="5" fill="#000"/>
<rect x="870" y="933" width="2" height="6" fill="#000"/>
<rect x="876" y="932" width="2" height="7" fill="#000"/>
<rect x="882" y="934" width="2" height="5" fill="#000"/>
<rect x="888" y="933" width="2" height="6" fill="#000"/>
<rect x="894" y="933" width="2" height="6" fill="#000"/>
<rect x="900" y="933" width="2" height="6" fill="#000"/>
<rect x="906" y="931" width="2" height="8" fill="#000"/>
<rect x="912" y="936" width="2" height="3" fill="#000"/>
<rect x="918" y="937" width="2" height="2" fill="#000"/>
<rect x="924" y="935" width="2" height="4" fill="#000"/>
<rect x="930" y="936" width="2" height="3" fill="#000"/>
<rect x="936" y="933" width="2" height="6" fill="#000"/>
<rect x="942" y="936" width="2" height="3" fill="#000"/>
<rect x="948" y="935" width="2" height="4" fill="#000"/>
<rect x="954" y="935" width="2" height="4" fill="#000"/>
<rect x="960" y="935" width="2" height="4" fill="#000"/>
<rect x="966" y="935" width="2" height="4" fill="#000"/>
<rect x="972" y="934" width="2" height="5" fill="#000"/>
<rect x="978" y="934" width="2" height="5" fill="#000"/>
<rect x="984" y="933" width="2" height="6" fill="#000"/>
<rect x="990" y="933" width="2" height="6" fill="#000"/>
<rect x="996" y="932" width="2" height="7" fill="#000"/>
<rect x="1002" y="931" width="2" height="8" fill="#000"/>
<rect x="1008" y="930" width="2" height="9" fill="#000"/>
<rect x="1014" y="934" width="2" height="5" fill="#000"/>
<rect x="1020" y="931" width="2" height="8" fill="#000"/>
<rect x="1026" y="932" width="2" height="7" fill="#000"/>
<rect x="1032" y="935" width="2" height="4" fill="#000"/>
<rect x="1038" y="934" width="2" height="5" fill="#000"/>
<rect x="1044" y="929" width="2" height="10" fill="#000"/>
<rect x="1050" y="931" width="2" height="8" fill="#000"/>
<rect x="1056" y="929" width="2" height="10" fill="#000"/>
<rect x="1062" y="933" width="2" height="6" fill="#000"/>
<rect x="1068" y="920" width="2" height="19" fill="#000"/>
<rect x="1074" y="923" width="2" height="16" fill="#000"/>
<rect x="1080" y="937" width="2" height="2" fill="#000"/>
</g>
<path d="M0.0,834.0 L50.0,831.5 L75.0,828.0 L100.0,824.0 L125.0,820.0 L155.0,811.5 L190.0,805.0 L220.0,801.5 L250.0,796.0 L275.0,791.5 L300.0,788.5 L320.0,785.0 L350.0,775.0 L380.0,767.5 L400.0,759.0 L430.0,742.5 L460.0,724.0 L500.0,705.0 L530.0,694.0 L560.0,684.0 L590.0,674.0 L620.0,663.0 L645.0,656.0 L670.0,649.0 L695.0,641.0 L720.0,633.0 L745.0,626.0 L770.0,619.0 L795.0,614.0 L820.0,612.0 L845.0,610.0 L870.0,605.5 L895.0,600.5 L920.0,597.0 L940.0,595.0 L955.0,592.5 L980.0,590.5 L1005.0,587.5 L1030.0,585.0 L1055.0,584.0 L1067.5,584.0 L1081.0,585.0" fill="none" stroke="#1c7a1c" stroke-width="2" stroke-linejoin="round"/>
<path d="M0.0,736.5 L12.0,724.0 L25.0,714.0 L37.5,703.8 L49.5,693.8 L61.5,683.8 L73.5,677.5 L85.5,673.8 L97.5,666.0 L109.5,658.8 L121.5,652.5 L133.5,645.0 L145.5,637.5 L157.5,631.0 L163.5,630.5 L175.5,628.0 L187.5,625.0 L199.5,622.0 L211.5,618.8 L223.5,615.0 L235.5,611.0 L247.5,606.0 L259.5,601.0 L271.5,600.8 L283.5,602.0 L295.5,603.0 L307.5,604.5 L322.5,605.7 L335.0,603.7 L347.5,601.0 L360.0,600.7 L372.5,599.5 L385.0,593.7 L397.5,581.0 L410.0,567.0 L422.5,555.0 L435.0,545.0 L447.5,536.0 L460.0,526.0 L472.5,516.0 L485.0,509.0 L497.5,499.0 L510.0,489.0 L522.5,480.0 L535.0,474.0 L547.5,471.0 L560.0,467.5 L572.5,464.0 L585.0,457.5 L597.5,454.5 L610.0,450.0 L620.0,445.0 L625.5,443.0 L637.5,446.0 L649.5,450.5 L661.5,451.0 L673.0,450.0 L682.5,452.5 L691.0,460.0 L703.0,471.0 L715.0,484.0 L727.0,495.0 L739.0,506.0 L751.0,517.0 L763.0,527.5 L775.0,531.0 L787.0,535.5 L799.0,542.0 L811.0,554.0 L823.0,564.5 L835.0,576.0 L847.0,585.0 L859.0,590.5 L871.0,593.0 L883.0,598.0 L895.0,602.5 L907.0,608.0 L917.5,615.0 L930.0,622.5 L942.5,627.0 L955.0,630.0 L967.5,634.5 L980.0,638.0 L992.5,641.0 L1005.0,644.0 L1017.5,647.0 L1030.0,650.0 L1042.5,652.5 L1055.0,654.5 L1067.5,659.0 L1075.0,664.5 L1081.0,669.0" fill="none" stroke="#e8141c" stroke-width="2" stroke-linejoin="round"/>
<path d="M0.0,686.2 L7.0,680.0 L13.0,670.0 L19.2,660.0 L25.2,651.2 L31.2,643.8 L37.5,636.2 L43.5,630.0 L49.5,627.5 L55.5,622.5 L61.5,615.0 L67.5,607.5 L73.5,601.2 L79.5,598.2 L85.5,597.5 L91.5,596.2 L97.5,593.8 L103.5,592.5 L109.5,591.2 L115.0,590.6 L121.0,593.5 L127.0,590.5 L133.0,588.2 L139.0,585.9 L145.0,582.5 L151.0,578.5 L157.0,577.4 L163.0,582.9 L169.0,585.5 L175.0,587.9 L181.0,591.8 L187.0,592.5 L193.0,593.9 L199.0,594.5 L205.0,597.4 L211.0,599.1 L217.0,600.4 L223.0,601.9 L229.0,601.4 L235.0,602.1 L241.0,601.4 L247.0,604.4 L253.0,608.3 L259.0,613.1 L265.0,618.7 L271.0,625.1 L277.0,632.2 L283.0,631.8 L289.0,632.2 L295.0,630.3 L301.0,630.4 L307.0,630.7 L313.0,626.9 L319.0,623.0 L325.0,616.6 L331.0,608.9 L337.0,604.1 L343.0,598.5 L349.0,594.9 L355.0,592.6 L361.0,593.0 L367.0,593.2 L373.0,591.5 L379.0,586.1 L385.0,577.2 L391.0,561.2 L397.0,538.7 L403.0,520.1 L409.0,501.6 L415.0,485.7 L421.0,469.3 L427.0,454.4 L433.0,440.2 L439.0,425.1 L445.0,412.0 L451.0,402.2 L457.0,390.6 L463.0,380.8 L469.0,377.8 L475.0,372.2 L481.0,365.0 L487.0,356.5 L493.0,349.4 L499.0,344.2 L505.0,343.7 L511.0,352.3 L517.0,362.6 L523.0,369.4 L529.0,376.8 L535.0,386.1 L541.0,395.6 L547.0,404.9 L553.0,415.6 L559.0,426.4 L565.0,438.8 L571.0,451.4 L577.0,462.3 L583.0,472.4 L589.0,477.9 L595.0,483.3 L601.0,488.4 L607.0,492.3 L613.0,495.1 L619.0,496.1 L625.0,496.4 L631.0,500.8 L637.0,509.1 L643.0,520.9 L649.0,530.0 L655.0,536.9 L661.0,541.6 L667.0,543.0 L673.0,543.7 L679.0,545.3 L685.0,548.1 L691.0,548.4 L697.0,550.5 L703.0,552.5 L709.0,552.2 L715.0,553.5 L721.0,555.2 L727.0,560.2 L733.0,565.0 L739.0,572.1 L745.0,580.7 L751.0,580.9 L757.0,579.1 L763.0,574.8 L769.0,572.5 L775.0,568.5 L781.0,566.3 L787.0,567.7 L793.0,569.9 L799.0,572.5 L805.0,578.1 L811.0,588.0 L817.0,595.7 L823.0,605.1 L829.0,616.2 L835.0,626.4 L841.0,632.9 L847.0,634.6 L853.0,639.4 L859.0,642.8 L865.0,643.5 L871.0,646.5 L877.0,649.6 L883.0,652.2 L889.0,656.5 L895.0,663.8 L901.0,667.7 L907.0,671.0 L913.0,674.2 L919.0,677.3 L925.0,677.7 L931.0,676.4 L937.0,676.9 L943.0,674.4 L949.0,670.1 L955.0,666.7 L961.0,664.0 L967.0,664.7 L973.0,665.9 L979.0,665.7 L985.0,666.9 L991.0,666.1 L997.0,663.0 L1003.0,661.5 L1009.0,662.0 L1015.0,661.1 L1021.0,663.0 L1027.0,664.5 L1033.0,666.5 L1039.0,666.8 L1045.0,661.0 L1051.0,656.2 L1057.0,651.7 L1063.0,650.1 L1069.0,653.1 L1075.0,656.3 L1081.0,661.4" fill="none" stroke="#4a4ae2" stroke-width="1"/>
<path d="M0.0,608.2 L7.0,603.8 L13.0,582.5 L19.2,575.5 L25.0,570.4 L31.0,572.2 L37.0,566.4 L43.0,567.5 L49.0,573.2 L55.0,578.0 L61.0,576.8 L67.0,583.0 L73.0,596.6 L79.0,608.5 L85.0,614.7 L91.0,626.5 L97.0,627.5 L103.0,619.8 L109.0,606.5 L115.0,599.4 L121.0,598.6 L127.0,585.2 L133.0,568.8 L139.0,555.5 L145.0,538.0 L151.0,512.2 L157.0,514.0 L163.0,546.4 L169.0,571.3 L175.0,599.5 L181.0,629.9 L187.0,643.1 L193.0,640.4 L199.0,644.9 L205.0,652.6 L211.0,655.8 L217.0,659.4 L223.0,652.1 L229.0,634.0 L235.0,618.4 L241.0,607.8 L247.0,600.9 L253.0,594.3 L259.0,602.2 L265.0,604.3 L271.0,606.9 L277.0,625.3 L283.0,640.5 L289.0,647.7 L295.0,645.9 L301.0,651.2 L307.0,637.3 L313.0,620.5 L319.0,608.1 L325.0,597.9 L331.0,569.5 L337.0,552.8 L343.0,538.8 L349.0,521.4 L355.0,522.4 L361.0,544.5 L367.0,557.5 L373.0,566.1 L379.0,567.4 L385.0,542.6 L391.0,479.6 L397.0,407.3 L403.0,355.1 L409.0,309.5 L415.0,279.9 L421.0,283.6 L427.0,299.9 L433.0,300.8 L439.0,302.2 L445.0,303.2 L451.0,301.2 L457.0,297.8 L463.0,301.2 L469.0,332.1 L475.0,363.3 L481.0,395.6 L487.0,421.0 L493.0,440.3 L499.0,432.9 L505.0,428.3 L511.0,428.9 L517.0,431.6 L523.0,435.1 L529.0,440.1 L535.0,449.4 L541.0,456.8 L547.0,469.2 L553.0,486.0 L559.0,500.7 L565.0,514.1 L571.0,524.1 L577.0,527.5 L583.0,528.2 L589.0,537.7 L595.0,541.4 L601.0,544.0 L607.0,540.8 L613.0,531.1 L619.0,505.7 L625.0,480.6 L631.0,478.2 L637.0,498.8 L643.0,538.4 L649.0,576.0 L655.0,611.6 L661.0,620.1 L667.0,605.1 L673.0,577.0 L679.0,561.8 L685.0,558.9 L691.0,551.2 L697.0,557.2 L703.0,563.6 L709.0,565.5 L715.0,563.1 L721.0,571.5 L727.0,579.6 L733.0,580.8 L739.0,585.3 L745.0,589.1 L751.0,580.6 L757.0,574.6 L763.0,577.7 L769.0,577.5 L775.0,562.7 L781.0,561.8 L787.0,559.3 L793.0,557.4 L799.0,561.8 L805.0,597.6 L811.0,637.9 L817.0,669.3 L823.0,704.6 L829.0,740.4 L835.0,756.0 L841.0,751.1 L847.0,735.1 L853.0,717.8 L859.0,691.6 L865.0,657.6 L871.0,635.2 L877.0,634.6 L883.0,629.2 L889.0,632.2 L895.0,643.9 L901.0,646.5 L907.0,645.1 L913.0,645.2 L919.0,645.0 L925.0,653.2 L931.0,672.8 L937.0,692.9 L943.0,705.4 L949.0,711.6 L955.0,712.0 L961.0,701.4 L967.0,686.3 L973.0,683.7 L979.0,674.0 L985.0,658.5 L991.0,643.7 L997.0,627.5 L1003.0,611.6 L1009.0,617.4 L1015.0,620.8 L1021.0,634.0 L1027.0,651.4 L1033.0,665.4 L1039.0,664.3 L1045.0,652.8 L1051.0,645.7 L1057.0,641.6 L1063.0,639.7 L1069.0,656.7 L1075.0,693.0 L1081.0,722.0" fill="none" stroke="#484848" stroke-width="1"/>
<g shape-rendering="crispEdges">
<path d="M0,769.5 H1195" stroke="#b02020" stroke-width="2" stroke-dasharray="2,2" fill="none"/>
<rect x="714" y="788" width="481" height="1" fill="#000"/>
<rect x="0" y="889" width="1280" height="1" fill="#000"/>
<rect x="1195" y="221" width="1" height="749" fill="#000"/>
<rect x="1279" y="222" width="1" height="748" fill="#c4c4c4"/>
<rect x="1196" y="235" width="2" height="1" fill="#000"/>
<rect x="1196" y="248" width="2" height="1" fill="#000"/>
<rect x="1196" y="261" width="2" height="1" fill="#000"/>
<rect x="1196" y="274" width="2" height="1" fill="#000"/>
<rect x="1196" y="287" width="2" height="1" fill="#000"/>
<rect x="1196" y="300" width="5" height="1" fill="#000"/>
<rect x="1196" y="313" width="2" height="1" fill="#000"/>
<rect x="1196" y="326" width="2" height="1" fill="#000"/>
<rect x="1196" y="339" width="2" height="1" fill="#000"/>
<rect x="1196" y="352" width="2" height="1" fill="#000"/>
<rect x="1196" y="365" width="2" height="1" fill="#000"/>
<rect x="1196" y="378" width="2" height="1" fill="#000"/>
<rect x="1196" y="391" width="2" height="1" fill="#000"/>
<rect x="1196" y="404" width="2" height="1" fill="#000"/>
<rect x="1196" y="417" width="2" height="1" fill="#000"/>
<rect x="1196" y="430" width="5" height="1" fill="#000"/>
<rect x="1196" y="443" width="2" height="1" fill="#000"/>
<rect x="1196" y="456" width="2" height="1" fill="#000"/>
<rect x="1196" y="469" width="2" height="1" fill="#000"/>
<rect x="1196" y="482" width="2" height="1" fill="#000"/>
<rect x="1196" y="495" width="2" height="1" fill="#000"/>
<rect x="1196" y="508" width="2" height="1" fill="#000"/>
<rect x="1196" y="521" width="2" height="1" fill="#000"/>
<rect x="1196" y="534" width="2" height="1" fill="#000"/>
<rect x="1196" y="547" width="2" height="1" fill="#000"/>
<rect x="1196" y="560" width="5" height="1" fill="#000"/>
<rect x="1196" y="573" width="2" height="1" fill="#000"/>
<rect x="1196" y="586" width="2" height="1" fill="#000"/>
<rect x="1196" y="599" width="2" height="1" fill="#000"/>
<rect x="1196" y="612" width="2" height="1" fill="#000"/>
<rect x="1196" y="625" width="2" height="1" fill="#000"/>
<rect x="1196" y="638" width="2" height="1" fill="#000"/>
<rect x="1196" y="651" width="2" height="1" fill="#000"/>
<rect x="1196" y="664" width="2" height="1" fill="#000"/>
<rect x="1196" y="677" width="2" height="1" fill="#000"/>
<rect x="1196" y="690" width="5" height="1" fill="#000"/>
<rect x="1196" y="703" width="2" height="1" fill="#000"/>
<rect x="1196" y="716" width="2" height="1" fill="#000"/>
<rect x="1196" y="729" width="2" height="1" fill="#000"/>
<rect x="1196" y="742" width="2" height="1" fill="#000"/>
<rect x="1196" y="755" width="2" height="1" fill="#000"/>
<rect x="1196" y="768" width="2" height="1" fill="#000"/>
<rect x="1196" y="781" width="2" height="1" fill="#000"/>
<rect x="1196" y="794" width="2" height="1" fill="#000"/>
<rect x="1196" y="807" width="2" height="1" fill="#000"/>
<rect x="1196" y="820" width="5" height="1" fill="#000"/>
<rect x="1196" y="833" width="2" height="1" fill="#000"/>
<rect x="1196" y="846" width="2" height="1" fill="#000"/>
<rect x="1196" y="859" width="2" height="1" fill="#000"/>
<rect x="1196" y="872" width="2" height="1" fill="#000"/>
<rect x="1196" y="885" width="2" height="1" fill="#000"/>
<rect x="1196" y="936" width="2" height="1" fill="#000"/>
<rect x="1196" y="932" width="2" height="1" fill="#000"/>
<rect x="1196" y="928" width="2" height="1" fill="#000"/>
<rect x="1196" y="924" width="2" height="1" fill="#000"/>
<rect x="1196" y="920" width="2" height="1" fill="#000"/>
<rect x="1196" y="917" width="2" height="1" fill="#000"/>
<rect x="1196" y="913" width="2" height="1" fill="#000"/>
<rect x="1196" y="909" width="2" height="1" fill="#000"/>
<rect x="1196" y="905" width="2" height="1" fill="#000"/>
<rect x="1196" y="902" width="5" height="1" fill="#000"/>
<rect x="1196" y="898" width="2" height="1" fill="#000"/>
<rect x="1196" y="894" width="2" height="1" fill="#000"/>
<rect x="0" y="939" width="1280" height="1" fill="#000"/>
<rect x="0" y="954" width="1195" height="1" fill="#000"/>
<rect x="0" y="969" width="1280" height="1" fill="#d8d4c4"/>
<rect x="0" y="940" width="22" height="14" fill="#f7f7e6"/>
<rect x="22" y="940" width="1" height="14" fill="#000"/>
<rect x="25" y="939" width="1" height="15" fill="#000"/>
<rect x="55" y="939" width="1" height="30" fill="#000"/>
<rect x="73" y="939" width="1" height="15" fill="#000"/>
<rect x="97" y="939" width="1" height="15" fill="#000"/>
<rect x="121" y="939" width="1" height="15" fill="#000"/>
<rect x="145" y="939" width="1" height="15" fill="#000"/>
<rect x="175" y="939" width="1" height="30" fill="#000"/>
<rect x="193" y="939" width="1" height="15" fill="#000"/>
<rect x="217" y="939" width="1" height="15" fill="#000"/>
<rect x="241" y="939" width="1" height="15" fill="#000"/>
<rect x="265" y="939" width="1" height="15" fill="#000"/>
<rect x="295" y="939" width="1" height="30" fill="#000"/>
<rect x="313" y="939" width="1" height="15" fill="#000"/>
<rect x="337" y="939" width="1" height="15" fill="#000"/>
<rect x="361" y="939" width="1" height="15" fill="#000"/>
<rect x="385" y="939" width="1" height="15" fill="#000"/>
<rect x="421" y="939" width="1" height="30" fill="#000"/>
<rect x="433" y="939" width="1" height="15" fill="#000"/>
<rect x="457" y="939" width="1" height="15" fill="#000"/>
<rect x="481" y="939" width="1" height="15" fill="#000"/>
<rect x="505" y="939" width="1" height="15" fill="#000"/>
<rect x="529" y="939" width="1" height="15" fill="#000"/>
<rect x="553" y="939" width="1" height="30" fill="#000"/>
<rect x="577" y="939" width="1" height="15" fill="#000"/>
<rect x="601" y="939" width="1" height="15" fill="#000"/>
<rect x="625" y="939" width="1" height="15" fill="#000"/>
<rect x="649" y="939" width="1" height="15" fill="#000"/>
<rect x="673" y="939" width="1" height="30" fill="#000"/>
<rect x="697" y="939" width="1" height="15" fill="#000"/>
<rect x="721" y="939" width="1" height="15" fill="#000"/>
<rect x="745" y="939" width="1" height="15" fill="#000"/>
<rect x="769" y="939" width="1" height="15" fill="#000"/>
<rect x="793" y="939" width="1" height="15" fill="#000"/>
<rect x="811" y="939" width="1" height="30" fill="#000"/>
<rect x="841" y="939" width="1" height="15" fill="#000"/>
<rect x="865" y="939" width="1" height="15" fill="#000"/>
<rect x="889" y="939" width="1" height="15" fill="#000"/>
<rect x="913" y="939" width="1" height="15" fill="#000"/>
<rect x="943" y="939" width="1" height="30" fill="#000"/>
<rect x="961" y="939" width="1" height="15" fill="#000"/>
<rect x="985" y="939" width="1" height="15" fill="#000"/>
<rect x="1009" y="939" width="1" height="15" fill="#000"/>
<rect x="1033" y="939" width="1" height="15" fill="#000"/>
<rect x="1069" y="939" width="1" height="30" fill="#000"/>
<rect x="1081" y="939" width="1" height="15" fill="#000"/>
<rect x="1093" y="939" width="1" height="15" fill="#000"/>
<rect x="1105" y="939" width="1" height="15" fill="#000"/>
<rect x="1117" y="939" width="1" height="15" fill="#000"/>
<rect x="1129" y="939" width="1" height="15" fill="#000"/>
<rect x="1141" y="939" width="1" height="15" fill="#000"/>
<rect x="1153" y="939" width="1" height="15" fill="#000"/>
<rect x="1165" y="939" width="1" height="15" fill="#000"/>
<rect x="1177" y="939" width="1" height="15" fill="#000"/>
<rect x="1189" y="939" width="1" height="15" fill="#000"/>
</g>
<g font-family="Liberation Sans, DejaVu Sans, sans-serif" font-size="11" fill="#000">
<text x="0" y="951">013</text>
<text x="40.5" y="951" text-anchor="middle">25</text>
<text x="64.5" y="951" text-anchor="middle">01</text>
<text x="85.5" y="951" text-anchor="middle">06</text>
<text x="109.5" y="951" text-anchor="middle">12</text>
<text x="133.5" y="951" text-anchor="middle">18</text>
<text x="160.5" y="951" text-anchor="middle">22</text>
<text x="184.5" y="951" text-anchor="middle">01</text>
<text x="205.5" y="951" text-anchor="middle">06</text>
<text x="229.5" y="951" text-anchor="middle">12</text>
<text x="253.5" y="951" text-anchor="middle">18</text>
<text x="280.5" y="951" text-anchor="middle">22</text>
<text x="304.5" y="951" text-anchor="middle">02</text>
<text x="325.5" y="951" text-anchor="middle">05</text>
<text x="349.5" y="951" text-anchor="middle">11</text>
<text x="373.5" y="951" text-anchor="middle">17</text>
<text x="403.5" y="951" text-anchor="middle">23</text>
<text x="445.5" y="951" text-anchor="middle">06</text>
<text x="469.5" y="951" text-anchor="middle">10</text>
<text x="493.5" y="951" text-anchor="middle">16</text>
<text x="517.5" y="951" text-anchor="middle">22</text>
<text x="541.5" y="951" text-anchor="middle">28</text>
<text x="565.5" y="951" text-anchor="middle">03</text>
<text x="589.5" y="951" text-anchor="middle">07</text>
<text x="613.5" y="951" text-anchor="middle">13</text>
<text x="637.5" y="951" text-anchor="middle">19</text>
<text x="661.5" y="951" text-anchor="middle">25</text>
<text x="685.5" y="951" text-anchor="middle">01</text>
<text x="709.5" y="951" text-anchor="middle">05</text>
<text x="733.5" y="951" text-anchor="middle">11</text>
<text x="757.5" y="951" text-anchor="middle">17</text>
<text x="781.5" y="951" text-anchor="middle">23</text>
<text x="802.5" y="951" text-anchor="middle">29</text>
<text x="826.5" y="951" text-anchor="middle">01</text>
<text x="853.5" y="951" text-anchor="middle">08</text>
<text x="877.5" y="951" text-anchor="middle">14</text>
<text x="901.5" y="951" text-anchor="middle">20</text>
<text x="928.5" y="951" text-anchor="middle">26</text>
<text x="952.5" y="951" text-anchor="middle">02</text>
<text x="973.5" y="951" text-anchor="middle">05</text>
<text x="997.5" y="951" text-anchor="middle">11</text>
<text x="1021.5" y="951" text-anchor="middle">17</text>
<text x="1051.5" y="951" text-anchor="middle">23</text>
<text x="1084" y="951">03</text>
<text x="28.0" y="966" text-anchor="middle">Jan-13</text>
<text x="115.5" y="966" text-anchor="middle">Fev-13</text>
<text x="235.5" y="966" text-anchor="middle">Mar-13</text>
<text x="358.5" y="966" text-anchor="middle">Abr-13</text>
<text x="487.5" y="966" text-anchor="middle">Mai-13</text>
<text x="613.5" y="966" text-anchor="middle">Jun-13</text>
<text x="742.5" y="966" text-anchor="middle">Jul-13</text>
<text x="877.5" y="966" text-anchor="middle">Ago-13</text>
<text x="1006.5" y="966" text-anchor="middle">Set-13</text>
<text x="1132.5" y="966" text-anchor="middle">Out-13</text>
<text x="1203" y="304">18,000</text>
<text x="1203" y="434">17,000</text>
<text x="1203" y="564">16,000</text>
<text x="1203" y="694">15,000</text>
<text x="1203" y="824">14,000</text>
<text x="1203" y="905">5.000.000</text>
<text x="27" y="902">JMT:xlis Volume</text>
</g>
<rect x="1195.5" y="762.5" width="41" height="16" fill="#ffffe1" stroke="#000" stroke-width="1"/>
<text x="1199" y="774.5" font-family="Liberation Sans, DejaVu Sans, sans-serif" font-size="11" fill="#000">14,380</text>
<rect x="1167.500" y="226.500" width="10" height="8" fill="#fff" stroke="#000" stroke-width="1" shape-rendering="crispEdges"/><rect x="1167" y="226" width="11" height="2" fill="#000" shape-rendering="crispEdges"/>
<rect x="1167.500" y="893.500" width="10" height="8" fill="#fff" stroke="#000" stroke-width="1" shape-rendering="crispEdges"/><rect x="1167" y="893" width="11" height="2" fill="#000" shape-rendering="crispEdges"/>
<path d="M1183,894 L1191,902 M1191,894 L1183,902" stroke="#000" stroke-width="2" fill="none"/>
<rect x="27" y="225" width="16" height="16" fill="#2e9b44"/><rect x="27.500" y="225.500" width="15" height="15" fill="none" stroke="#22863a" stroke-width="1"/>
<text x="29.500" y="237" font-family="Liberation Sans, DejaVu Sans, sans-serif" font-size="10" font-weight="bold" fill="#e8ffe8">Eq</text>
<g font-family="Liberation Sans, DejaVu Sans, sans-serif" font-size="11"><text x="43.500" y="236.500" textLength="37.500" lengthAdjust="spacingAndGlyphs">JMT:xlis</text><text x="102" y="236.500" textLength="57" lengthAdjust="spacingAndGlyphs">DSMA 5; 20</text><text x="179" y="236.500" fill="#d01818" textLength="69.500" lengthAdjust="spacingAndGlyphs">DSMA 50; 200</text></g>
<path d="M87,230 h6 l-3,3.500z M164.500,230 h6 l-3,3.500z"/><path d="M254.500,230 h6 l-3,3.500z" fill="#d01818"/>
<g shape-rendering="crispEdges">
<rect x="595" y="699" width="119" height="184" fill="#fff"/>
<rect x="596" y="700" width="117" height="18" fill="#f3f3f3"/>
<rect x="596" y="736" width="117" height="18" fill="#f3f3f3"/>
<rect x="596" y="773" width="117" height="18" fill="#f3f3f3"/>
<rect x="596" y="809" width="117" height="18" fill="#f3f3f3"/>
<rect x="596" y="846" width="117" height="18" fill="#f3f3f3"/>
<rect x="595.5" y="699.5" width="118" height="183" fill="none" stroke="#000" stroke-width="1"/>
</g>
<g font-family="Liberation Sans, DejaVu Sans, sans-serif" font-size="11">
<text x="602" y="713.0" fill="#000">03-Out-2013</text>
<text x="602" y="731.2" fill="#000">Máximo</text>
<text x="664" y="731.2" fill="#000">14,455</text>
<text x="602" y="749.4" fill="#000">Mínimo</text>
<text x="664" y="749.4" fill="#000">14,290</text>
<text x="602" y="767.6" fill="#000">Aberto</text>
<text x="664" y="767.6" fill="#000">14,300</text>
<text x="602" y="785.8" fill="#000">Último</text>
<text x="664" y="785.8" fill="#000">14,380</text>
<text x="602" y="804.0" fill="#1a1a9a">DSMA Slow</text>
<text x="664" y="804.0" fill="#1a1a9a">15,213</text>
<text x="602" y="822.2" fill="#000">DSMA Fast</text>
<text x="664" y="822.2" fill="#000">14,746</text>
<text x="602" y="840.4" fill="#1c6e1c">DSMA Slow</text>
<text x="664" y="840.4" fill="#1c6e1c">15,808</text>
<text x="602" y="858.6" fill="#c01818">DSMA Fast</text>
<text x="664" y="858.6" fill="#c01818">15,154</text>
<text x="602" y="876.8" fill="#000">Vol</text>
<text x="664" y="876.8" fill="#000">315936</text>
</g>
<g shape-rendering="crispEdges">
<rect x="240" y="338" width="630" height="25" fill="#fff"/>
<rect x="268" y="338" width="6" height="25" fill="#d6d2c2"/><rect x="273" y="338" width="1" height="25" fill="#8a8878"/>
<rect x="274" y="353" width="207" height="1" fill="#a0a090"/>
<rect x="495" y="338" width="1" height="25" fill="#a8a8a8"/>
<rect x="500" y="339" width="1" height="22" fill="#ececec"/>
<rect x="505" y="339" width="1" height="22" fill="#ececec"/>
<rect x="510" y="339" width="1" height="22" fill="#ececec"/>
<rect x="516" y="339" width="1" height="22" fill="#ececec"/>
<rect x="523" y="339" width="1" height="22" fill="#ececec"/>
<rect x="527" y="339" width="1" height="22" fill="#ececec"/>
<rect x="531" y="339" width="1" height="22" fill="#ececec"/>
<rect x="538" y="339" width="1" height="22" fill="#ececec"/>
<rect x="544" y="339" width="1" height="22" fill="#ececec"/>
<rect x="549" y="339" width="1" height="22" fill="#ececec"/>
<rect x="554" y="339" width="1" height="22" fill="#ececec"/>
<rect x="561" y="339" width="1" height="22" fill="#ececec"/>
<rect x="568" y="339" width="1" height="22" fill="#ececec"/>
<rect x="575" y="339" width="1" height="22" fill="#ececec"/>
<rect x="580" y="339" width="1" height="22" fill="#ececec"/>
<rect x="585" y="339" width="1" height="22" fill="#ececec"/>
<rect x="590" y="339" width="1" height="22" fill="#ececec"/>
<rect x="597" y="339" width="1" height="22" fill="#ececec"/>
<rect x="601" y="339" width="1" height="22" fill="#ececec"/>
<rect x="605" y="339" width="1" height="22" fill="#ececec"/>
<rect x="610" y="339" width="1" height="22" fill="#ececec"/>
<rect x="614" y="339" width="1" height="22" fill="#ececec"/>
<rect x="620" y="339" width="1" height="22" fill="#ececec"/>
<rect x="624" y="339" width="1" height="22" fill="#ececec"/>
<rect x="630" y="339" width="1" height="22" fill="#ececec"/>
<rect x="637" y="339" width="1" height="22" fill="#ececec"/>
<rect x="644" y="339" width="1" height="22" fill="#ececec"/>
<rect x="651" y="339" width="1" height="22" fill="#ececec"/>
<rect x="658" y="339" width="1" height="22" fill="#ececec"/>
<rect x="665" y="339" width="1" height="22" fill="#ececec"/>
<rect x="670" y="339" width="1" height="22" fill="#ececec"/>
<rect x="676" y="339" width="1" height="22" fill="#ececec"/>
<rect x="680" y="339" width="1" height="22" fill="#ececec"/>
<rect x="684" y="339" width="1" height="22" fill="#ececec"/>
<rect x="689" y="339" width="1" height="22" fill="#ececec"/>
<rect x="696" y="339" width="1" height="22" fill="#ececec"/>
<rect x="701" y="339" width="1" height="22" fill="#ececec"/>
<rect x="707" y="339" width="1" height="22" fill="#ececec"/>
<rect x="714" y="339" width="1" height="22" fill="#ececec"/>
<rect x="720" y="339" width="1" height="22" fill="#ececec"/>
<rect x="727" y="339" width="1" height="22" fill="#ececec"/>
<rect x="734" y="339" width="1" height="22" fill="#ececec"/>
<rect x="740" y="339" width="1" height="22" fill="#ececec"/>
<rect x="747" y="339" width="1" height="22" fill="#ececec"/>
<rect x="752" y="339" width="1" height="22" fill="#ececec"/>
<rect x="758" y="339" width="1" height="22" fill="#ececec"/>
<rect x="762" y="339" width="1" height="22" fill="#ececec"/>
<rect x="768" y="339" width="1" height="22" fill="#ececec"/>
<rect x="773" y="339" width="1" height="22" fill="#ececec"/>
<rect x="779" y="339" width="1" height="22" fill="#ececec"/>
<rect x="783" y="339" width="1" height="22" fill="#ececec"/>
<rect x="496" y="360" width="292" height="1" fill="#e4e4e4"/>
<rect x="788" y="339" width="1" height="23" fill="#c8c8c8"/>
<rect x="825" y="338" width="45" height="25" fill="#ece9d8"/>
<rect x="825" y="338" width="9" height="25" fill="#f8f8f4"/><rect x="855" y="338" width="1" height="25" fill="#c0bcac"/>
</g>
<svg x="274" y="338" width="140" height="14" viewBox="0 0 140 14"><text x="0.5" y="6.5" font-family="Liberation Sans, DejaVu Sans, sans-serif" font-size="11" fill="#000">reenshotCaptor Window</text></svg>
<text x="790" y="361" font-family="Liberation Sans, DejaVu Sans, sans-serif" font-size="4" fill="#666">- 18,000</text>
<g><rect x="831" y="351" width="15" height="10" rx="2" fill="#d8401c"/><rect x="835" y="348" width="7" height="4" rx="1" fill="none" stroke="#c03010" stroke-width="1.5"/><rect x="831" y="354" width="15" height="1.5" fill="#f08060"/><rect x="837" y="353" width="3" height="3" fill="#3050c0"/><path d="M838,340 q4,-1 6,-3" stroke="#3060d0" stroke-width="2" fill="none"/></g>
</svg>
<div id="status">
 <span class="tx" style="left:3.5px;top:8px;;transform:scaleX(0.972)">Último início de sessão bem sucedido: 02-Out-2013 16:35:55 GMT. Tentativa de início de sessão anterior bem sucedida.</span>
 <div class="ssep" style="left:943px"></div><div class="ssep" style="left:969px"></div><div class="ssep" style="left:994px"></div><div class="ssep" style="left:1019px"></div><div class="ssep" style="left:1044px"></div><div class="ssep" style="left:1140px"></div>
 <span class="tx" style="left:1048.5px;top:8px;;transform:scaleX(1.026)">Ao vivo</span><span class="tx" style="left:1143px;top:8px;;transform:scaleX(0.987)">Português</span>
 <svg class="abs" style="left:948px;top:5px" width="18" height="16" viewBox="0 0 18 16"><circle cx="5" cy="5" r="2.800" fill="#f0d8a0" stroke="#333" stroke-width="0.800"/><path d="M1,14 v-3 q0,-2.500 4,-2.500 t4,2.500 v3z" fill="#fff" stroke="#222" stroke-width="1"/><rect x="9.500" y="1.500" width="6" height="4.500" rx="1" fill="#fff" stroke="#222" stroke-width="1"/></svg>
 <svg class="abs" style="left:998px;top:3px" width="18" height="20" viewBox="0 0 18 20"><circle cx="9" cy="7" r="6" fill="#2a78c8"/><path d="M5,4 q3,-2 5,0 q1,3 -2,4 q-3,0 -3,-4z M10,9 q3,-1 4,1 q-1,3 -3,2z" fill="#48b048"/><rect x="7.500" y="12" width="3" height="4" fill="#888"/><rect x="2" y="15" width="14" height="3" fill="#e8c040" stroke="#a88820" stroke-width="0.600"/></svg>
 <svg class="abs" style="left:1022px;top:3px" width="18" height="20" viewBox="0 0 18 20"><path d="M5,9 v-3 a4,4 0 0 1 8,0 v3" stroke="#2f8a2f" stroke-width="2" fill="none"/><rect x="2" y="8" width="14" height="10" rx="1.500" fill="#3fae3f" stroke="#1f6e1f"/><path d="M9,11 v4 M7,13 h4" stroke="#d8f0d0" stroke-width="1.400"/></svg>
</div>
<div id="taskbar">
 <div id="start"></div>
 <svg class="abs" style="left:9px;top:5px" width="20" height="20" viewBox="0 0 20 20"><path d="M2,4 q3,-2 6,0 l-1.500,5.500 q-3,-2 -6,0z" fill="#e8502a"/><path d="M9.500,4.500 q3,2 6,0 l-1.500,5.500 q-3,2 -6,0z" fill="#6cc04a"/><path d="M0.500,10.500 q3,-2 6,0 l-1.500,5.500 q-3,-2 -6,0z" fill="#3a7ee8"/><path d="M7.500,11 q3,2 6,0 l-1.500,5.500 q-3,2 -6,0z" fill="#f0c030"/></svg>
 <span class="tx" style="left:34.5px;top:6px;font-style:italic;font-weight:bold;font-size:17px;line-height:20px;color:#fff;text-shadow:1px 1px 1px #1a4a1a;transform:scaleX(1.018)">Iniciar</span>
 <div class="tk" style="left:120px;width:158px"></div>
 <div class="tk" style="left:280px;width:158px"></div>
 <div class="tk on" style="left:440px;width:158px"></div>
 <svg class="abs" style="left:130px;top:7px" width="16" height="16" viewBox="0 0 16 16"><circle cx="8" cy="8" r="7.500" fill="#e8483a"/><path d="M8,8 L1.500,4.500 A7.500,7.500 0 0 0 6,15.200z" fill="#3fa84a"/><path d="M8,8 L6,15.200 A7.500,7.500 0 0 0 15.400,6.500z" fill="#f4c92a"/><circle cx="8" cy="8" r="3.400" fill="#fff"/><circle cx="8" cy="8" r="2.600" fill="#4a8af0"/></svg>
 <svg class="abs" style="left:290px;top:7px" width="16" height="16" viewBox="0 0 16 16"><rect x="0.500" y="0.500" width="15" height="15" rx="2" fill="#f4f4f0" stroke="#b8b8a8"/><path d="M8,2 q-2.500,2.500 0,4.500 q2,2 0,3.500" stroke="#e07020" stroke-width="1.300" fill="none"/><path d="M3.500,11 h8 q2,0.500 0,2 h-8z" fill="#4a78b8"/></svg>
 <svg class="abs" style="left:451px;top:6px" width="17" height="17" viewBox="0 0 17 17"><circle cx="8.500" cy="8.500" r="7.500" fill="#1a3a8c"/><path d="M2,9 a6.500,6.500 0 0 1 13,0 a7,5 0 0 0 -13,0z" fill="#e8eef8"/><path d="M4,12.500 q4.500,-4 9,0" stroke="#9db4e0" stroke-width="1.200" fill="none"/></svg>
 <span class="tx" style="left:148px;top:9px;color:#fff;transform:scaleX(0.995)">Novo Streamer de Co...</span><span class="tx" style="left:308px;top:9px;color:#fff;transform:scaleX(1.007)">Streamer de Cotaçõe...</span><span class="tx" style="left:469px;top:9px;color:#fff;transform:scaleX(0.983)">Gobulling Pro - Predef...</span>
 <div id="tray"></div>
 <svg class="abs" style="left:1196px;top:5px" width="20" height="20"><circle cx="10" cy="10" r="8" fill="#3f8ef4" stroke="#bcd8ff" stroke-width="1.200"/><path d="M11.500,6 L7.500,10 L11.500,14" stroke="#fff" stroke-width="2" fill="none"/></svg>
 <svg class="abs" style="left:1214px;top:5px" width="20" height="20" viewBox="0 0 20 20"><rect x="1" y="1" width="17" height="13" fill="#e8e8f0" stroke="#888"/><rect x="3" y="3" width="13" height="8" fill="#d82828"/><text x="4.500" y="9.500" font-family="Liberation Sans, sans-serif" font-size="6" font-weight="bold" fill="#fff">SC</text><rect x="7" y="14" width="5" height="3" fill="#aaa"/><rect x="4" y="17" width="11" height="2" fill="#ccc"/></svg>
 <span class="tx" style="left:1238px;top:9px;color:#fff;transform:scaleX(1.104)">11:59</span>
</div>

</body></html>
